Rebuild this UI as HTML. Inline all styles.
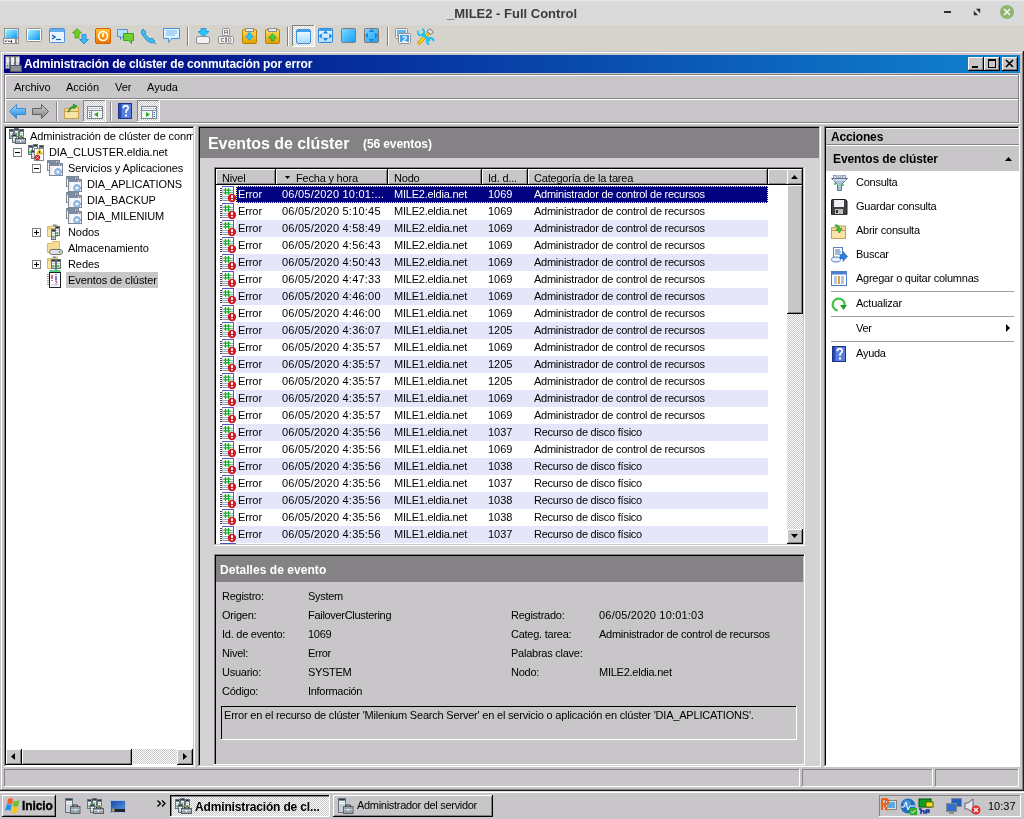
<!DOCTYPE html><html><head><meta charset="utf-8"><style>
html,body{margin:0;padding:0;}
body{width:1024px;height:819px;overflow:hidden;position:relative;background:#c8c6c8;font-family:"Liberation Sans",sans-serif;}
body>div,body>svg{position:absolute;}
.t{white-space:nowrap;will-change:transform;}
</style></head><body>
<div style="left:0px;top:0px;width:1024px;height:25px;background:#dadada;"></div>
<div style="left:0px;top:0px;width:1024px;height:1px;background:#e8e8e8;"></div>
<div class="t" style="left:447px;top:6px;font-size:13px;line-height:16px;font-weight:bold;color:#3c3c3c;letter-spacing:0px;">_MILE2 - Full Control</div>
<div style="left:944px;top:11px;width:7px;height:2px;background:#2e2e2e;"></div>
<svg style="left:972px;top:8px" width="10" height="9"><path d="M3.8 0.8H8.2V5.2Z" fill="#2e2e2e"/><path d="M1.8 2.8V7.2H6.2Z" fill="#2e2e2e"/></svg>
<svg style="left:999px;top:4px" width="16" height="16"><circle cx="8" cy="8" r="7" fill="#8fb572"/><path d="M5 5 L11 11 M11 5 L5 11" stroke="#fff" stroke-width="1.4"/></svg>
<div style="left:0px;top:25px;width:1024px;height:26px;background:#d6d2cc;"></div>
<div style="left:0px;top:51px;width:1024px;height:740px;background:#c8c6c8;"></div>
<div style="left:1px;top:52px;width:1022px;height:1px;background:#ffffff;"></div>
<div style="left:1px;top:52px;width:1px;height:738px;background:#ffffff;"></div>
<div style="left:1023px;top:51px;width:1px;height:740px;background:#202020;"></div>
<div style="left:0px;top:790px;width:1024px;height:1px;background:#202020;"></div>
<div style="left:1022px;top:52px;width:1px;height:738px;background:#848284;"></div>
<div style="left:1px;top:789px;width:1022px;height:1px;background:#848284;"></div>
<div style="left:4px;top:55px;width:1016px;height:18px;background:linear-gradient(to right,#000080,#1084d0)"></div>
<div class="t" style="left:24px;top:57px;font-size:12px;line-height:14px;font-weight:bold;color:#fff;letter-spacing:-0.17px;">Administración de clúster de conmutación por error</div>
<div style="left:968px;top:57px;width:16px;height:14px;background:#c8c6c8;"></div>
<div style="left:968px;top:57px;width:16px;height:1px;background:#ffffff;"></div>
<div style="left:968px;top:57px;width:1px;height:14px;background:#ffffff;"></div>
<div style="left:968px;top:70px;width:16px;height:1px;background:#000000;"></div>
<div style="left:983px;top:57px;width:1px;height:14px;background:#000000;"></div>
<div style="left:969px;top:69px;width:14px;height:1px;background:#848284;"></div>
<div style="left:982px;top:58px;width:1px;height:12px;background:#848284;"></div>
<div style="left:984px;top:57px;width:16px;height:14px;background:#c8c6c8;"></div>
<div style="left:984px;top:57px;width:16px;height:1px;background:#ffffff;"></div>
<div style="left:984px;top:57px;width:1px;height:14px;background:#ffffff;"></div>
<div style="left:984px;top:70px;width:16px;height:1px;background:#000000;"></div>
<div style="left:999px;top:57px;width:1px;height:14px;background:#000000;"></div>
<div style="left:985px;top:69px;width:14px;height:1px;background:#848284;"></div>
<div style="left:998px;top:58px;width:1px;height:12px;background:#848284;"></div>
<div style="left:1002px;top:57px;width:16px;height:14px;background:#c8c6c8;"></div>
<div style="left:1002px;top:57px;width:16px;height:1px;background:#ffffff;"></div>
<div style="left:1002px;top:57px;width:1px;height:14px;background:#ffffff;"></div>
<div style="left:1002px;top:70px;width:16px;height:1px;background:#000000;"></div>
<div style="left:1017px;top:57px;width:1px;height:14px;background:#000000;"></div>
<div style="left:1003px;top:69px;width:14px;height:1px;background:#848284;"></div>
<div style="left:1016px;top:58px;width:1px;height:12px;background:#848284;"></div>
<div style="left:972px;top:66px;width:6px;height:2px;background:#000000;"></div>
<div style="left:988px;top:59px;width:8px;height:9px;background:#000000;"></div>
<div style="left:989px;top:61px;width:6px;height:6px;background:#c8c6c8;"></div>
<svg style="left:1005px;top:59px" width="10" height="9"><path d="M1 1 L8 8 M8 1 L1 8" stroke="#000" stroke-width="1.6"/></svg>
<div style="left:4px;top:74px;width:1016px;height:1px;background:#848284;"></div>
<div style="left:5px;top:75px;width:1014px;height:1px;background:#ffffff;"></div>
<div style="left:4px;top:98px;width:1015px;height:1px;background:#848284;"></div>
<div style="left:5px;top:99px;width:1015px;height:1px;background:#ffffff;"></div>
<div style="left:4px;top:122px;width:1015px;height:1px;background:#848284;"></div>
<div style="left:4px;top:123px;width:1016px;height:1px;background:#ffffff;"></div>
<div style="left:4px;top:74px;width:1px;height:49px;background:#848284;"></div>
<div style="left:5px;top:75px;width:1px;height:47px;background:#ffffff;"></div>
<div style="left:1018px;top:75px;width:1px;height:48px;background:#848284;"></div>
<div style="left:1019px;top:74px;width:1px;height:50px;background:#ffffff;"></div>
<div class="t" style="left:14px;top:81px;font-size:11px;line-height:13px;font-weight:normal;color:#000;letter-spacing:0px;">Archivo</div>
<div class="t" style="left:66px;top:81px;font-size:11px;line-height:13px;font-weight:normal;color:#000;letter-spacing:0px;">Acción</div>
<div class="t" style="left:115px;top:81px;font-size:11px;line-height:13px;font-weight:normal;color:#000;letter-spacing:0px;">Ver</div>
<div class="t" style="left:147px;top:81px;font-size:11px;line-height:13px;font-weight:normal;color:#000;letter-spacing:0px;">Ayuda</div>
<div style="left:4px;top:126px;width:191px;height:1px;background:#848284;"></div>
<div style="left:4px;top:126px;width:1px;height:641px;background:#848284;"></div>
<div style="left:5px;top:127px;width:189px;height:1px;background:#000000;"></div>
<div style="left:5px;top:127px;width:1px;height:639px;background:#000000;"></div>
<div style="left:4px;top:766px;width:191px;height:1px;background:#ffffff;"></div>
<div style="left:194px;top:126px;width:1px;height:641px;background:#ffffff;"></div>
<div style="left:5px;top:765px;width:189px;height:1px;background:#c8c6c8;"></div>
<div style="left:193px;top:127px;width:1px;height:639px;background:#c8c6c8;"></div>
<div style="left:6px;top:128px;width:187px;height:638px;background:#ffffff;"></div>
<div style="left:198px;top:126px;width:623px;height:1px;background:#848284;"></div>
<div style="left:198px;top:126px;width:1px;height:641px;background:#848284;"></div>
<div style="left:199px;top:127px;width:621px;height:1px;background:#000000;"></div>
<div style="left:199px;top:127px;width:1px;height:639px;background:#000000;"></div>
<div style="left:198px;top:766px;width:623px;height:1px;background:#ffffff;"></div>
<div style="left:820px;top:126px;width:1px;height:641px;background:#ffffff;"></div>
<div style="left:199px;top:765px;width:621px;height:1px;background:#c8c6c8;"></div>
<div style="left:819px;top:127px;width:1px;height:639px;background:#c8c6c8;"></div>
<div style="left:200px;top:128px;width:620px;height:638px;background:#d4d2d4;"></div>
<div style="left:824px;top:126px;width:196px;height:1px;background:#848284;"></div>
<div style="left:824px;top:126px;width:1px;height:641px;background:#848284;"></div>
<div style="left:825px;top:127px;width:194px;height:1px;background:#000000;"></div>
<div style="left:825px;top:127px;width:1px;height:639px;background:#000000;"></div>
<div style="left:824px;top:766px;width:196px;height:1px;background:#ffffff;"></div>
<div style="left:1019px;top:126px;width:1px;height:641px;background:#ffffff;"></div>
<div style="left:825px;top:765px;width:194px;height:1px;background:#c8c6c8;"></div>
<div style="left:1018px;top:127px;width:1px;height:639px;background:#c8c6c8;"></div>
<div style="left:826px;top:128px;width:193px;height:638px;background:#ffffff;"></div>
<div style="left:200px;top:128px;width:619px;height:30px;background:#848284;"></div>
<div class="t" style="left:208px;top:134px;font-size:16px;line-height:20px;font-weight:bold;color:#fff;letter-spacing:-0.05px;">Eventos de clúster</div>
<div class="t" style="left:363px;top:137px;font-size:12px;line-height:14px;font-weight:bold;color:#fff;letter-spacing:-0.1px;">(56 eventos)</div>
<div style="left:214px;top:167px;width:591px;height:1px;background:#848284;"></div>
<div style="left:214px;top:167px;width:1px;height:379px;background:#848284;"></div>
<div style="left:215px;top:168px;width:589px;height:1px;background:#000000;"></div>
<div style="left:215px;top:168px;width:1px;height:377px;background:#000000;"></div>
<div style="left:214px;top:545px;width:591px;height:1px;background:#ffffff;"></div>
<div style="left:804px;top:167px;width:1px;height:379px;background:#ffffff;"></div>
<div style="left:215px;top:544px;width:589px;height:1px;background:#c8c6c8;"></div>
<div style="left:803px;top:168px;width:1px;height:377px;background:#c8c6c8;"></div>
<div style="left:216px;top:169px;width:587px;height:375px;background:#ffffff;"></div>
<div style="left:216px;top:169px;width:60px;height:16px;background:#c8c6c8;"></div>
<div style="left:216px;top:169px;width:60px;height:1px;background:#ffffff;"></div>
<div style="left:216px;top:169px;width:1px;height:16px;background:#ffffff;"></div>
<div style="left:216px;top:184px;width:60px;height:1px;background:#000000;"></div>
<div style="left:217px;top:183px;width:58px;height:1px;background:#848284;"></div>
<div style="left:275px;top:169px;width:1px;height:16px;background:#000000;"></div>
<div style="left:274px;top:170px;width:1px;height:14px;background:#848284;"></div>
<div class="t" style="left:222px;top:172px;font-size:11px;line-height:13px;font-weight:normal;color:#000;letter-spacing:-0.2px;">Nivel</div>
<div style="left:276px;top:169px;width:112px;height:16px;background:#c8c6c8;"></div>
<div style="left:276px;top:169px;width:112px;height:1px;background:#ffffff;"></div>
<div style="left:276px;top:169px;width:1px;height:16px;background:#ffffff;"></div>
<div style="left:276px;top:184px;width:112px;height:1px;background:#000000;"></div>
<div style="left:277px;top:183px;width:110px;height:1px;background:#848284;"></div>
<div style="left:387px;top:169px;width:1px;height:16px;background:#000000;"></div>
<div style="left:386px;top:170px;width:1px;height:14px;background:#848284;"></div>
<div class="t" style="left:296px;top:172px;font-size:11px;line-height:13px;font-weight:normal;color:#000;letter-spacing:-0.2px;">Fecha y hora</div>
<div style="left:388px;top:169px;width:94px;height:16px;background:#c8c6c8;"></div>
<div style="left:388px;top:169px;width:94px;height:1px;background:#ffffff;"></div>
<div style="left:388px;top:169px;width:1px;height:16px;background:#ffffff;"></div>
<div style="left:388px;top:184px;width:94px;height:1px;background:#000000;"></div>
<div style="left:389px;top:183px;width:92px;height:1px;background:#848284;"></div>
<div style="left:481px;top:169px;width:1px;height:16px;background:#000000;"></div>
<div style="left:480px;top:170px;width:1px;height:14px;background:#848284;"></div>
<div class="t" style="left:394px;top:172px;font-size:11px;line-height:13px;font-weight:normal;color:#000;letter-spacing:-0.2px;">Nodo</div>
<div style="left:482px;top:169px;width:46px;height:16px;background:#c8c6c8;"></div>
<div style="left:482px;top:169px;width:46px;height:1px;background:#ffffff;"></div>
<div style="left:482px;top:169px;width:1px;height:16px;background:#ffffff;"></div>
<div style="left:482px;top:184px;width:46px;height:1px;background:#000000;"></div>
<div style="left:483px;top:183px;width:44px;height:1px;background:#848284;"></div>
<div style="left:527px;top:169px;width:1px;height:16px;background:#000000;"></div>
<div style="left:526px;top:170px;width:1px;height:14px;background:#848284;"></div>
<div class="t" style="left:488px;top:172px;font-size:11px;line-height:13px;font-weight:normal;color:#000;letter-spacing:-0.2px;">Id. d...</div>
<div style="left:528px;top:169px;width:240px;height:16px;background:#c8c6c8;"></div>
<div style="left:528px;top:169px;width:240px;height:1px;background:#ffffff;"></div>
<div style="left:528px;top:169px;width:1px;height:16px;background:#ffffff;"></div>
<div style="left:528px;top:184px;width:240px;height:1px;background:#000000;"></div>
<div style="left:529px;top:183px;width:238px;height:1px;background:#848284;"></div>
<div style="left:767px;top:169px;width:1px;height:16px;background:#000000;"></div>
<div style="left:766px;top:170px;width:1px;height:14px;background:#848284;"></div>
<div class="t" style="left:534px;top:172px;font-size:11px;line-height:13px;font-weight:normal;color:#000;letter-spacing:-0.2px;">Categoría de la tarea</div>
<div style="left:768px;top:169px;width:19px;height:16px;background:#c8c6c8;"></div>
<div style="left:768px;top:169px;width:19px;height:1px;background:#ffffff;"></div>
<div style="left:768px;top:169px;width:1px;height:16px;background:#ffffff;"></div>
<div style="left:768px;top:184px;width:19px;height:1px;background:#000000;"></div>
<div style="left:769px;top:183px;width:17px;height:1px;background:#848284;"></div>
<svg style="left:285px;top:176px" width="5" height="3"><path d="M0 0 H5 L2.5 3Z" fill="#000"/></svg>
<div style="left:236px;top:186px;width:532px;height:17px;background:#000080;"></div>
<div style="left:236px;top:186px;width:530px;height:15px;border:1px dotted #ffff80;"></div>
<svg style="left:220px;top:186px" width="17" height="17" viewBox="0 0 17 17"><rect x="2" y="0" width="12" height="15" fill="#fff"/><path d="M2 0.5H14M13.5 0.5V15" stroke="#5858c8"/><path d="M2 14.5H14" stroke="#909090"/><path d="M0 2.5h2M0 4.5h2M0 6.5h2M0 8.5h2M0 10.5h2M0 12.5h2M0 14.5h2" stroke="#404040"/><path d="M2.5 1v14" stroke="#c8c8d8"/><path d="M3 4.5h10M3 6.5h10M3 10.5h10M3 12.5h10" stroke="#88b8d0"/><path d="M5.5 2v7M8.5 2v7M3.5 4h7M3.5 7h7" stroke="#18b018" stroke-width="1.2"/><circle cx="12" cy="12" r="4.2" fill="#d01c24"/><rect x="11" y="9.3" width="2" height="2.6" fill="#fff"/><rect x="11" y="13" width="2" height="1.2" fill="#fff"/></svg>
<div class="t" style="left:238px;top:188px;font-size:11px;line-height:13px;font-weight:normal;color:#fff;letter-spacing:-0.1px;">Error</div>
<div class="t" style="left:282px;top:188px;font-size:11px;line-height:13px;font-weight:normal;color:#fff;letter-spacing:0.22px;">06/05/2020 10:01:...</div>
<div class="t" style="left:394px;top:188px;font-size:11px;line-height:13px;font-weight:normal;color:#fff;letter-spacing:-0.23px;">MILE2.eldia.net</div>
<div class="t" style="left:488px;top:188px;font-size:11px;line-height:13px;font-weight:normal;color:#fff;letter-spacing:0px;">1069</div>
<div class="t" style="left:534px;top:188px;font-size:11px;line-height:13px;font-weight:normal;color:#fff;letter-spacing:-0.25px;">Administrador de control de recursos</div>
<svg style="left:220px;top:203px" width="17" height="17" viewBox="0 0 17 17"><rect x="2" y="0" width="12" height="15" fill="#fff"/><path d="M2 0.5H14M13.5 0.5V15" stroke="#5858c8"/><path d="M2 14.5H14" stroke="#909090"/><path d="M0 2.5h2M0 4.5h2M0 6.5h2M0 8.5h2M0 10.5h2M0 12.5h2M0 14.5h2" stroke="#404040"/><path d="M2.5 1v14" stroke="#c8c8d8"/><path d="M3 4.5h10M3 6.5h10M3 10.5h10M3 12.5h10" stroke="#88b8d0"/><path d="M5.5 2v7M8.5 2v7M3.5 4h7M3.5 7h7" stroke="#18b018" stroke-width="1.2"/><circle cx="12" cy="12" r="4.2" fill="#d01c24"/><rect x="11" y="9.3" width="2" height="2.6" fill="#fff"/><rect x="11" y="13" width="2" height="1.2" fill="#fff"/></svg>
<div class="t" style="left:238px;top:205px;font-size:11px;line-height:13px;font-weight:normal;color:#000;letter-spacing:-0.1px;">Error</div>
<div class="t" style="left:282px;top:205px;font-size:11px;line-height:13px;font-weight:normal;color:#000;letter-spacing:0.22px;">06/05/2020 5:10:45</div>
<div class="t" style="left:394px;top:205px;font-size:11px;line-height:13px;font-weight:normal;color:#000;letter-spacing:-0.23px;">MILE2.eldia.net</div>
<div class="t" style="left:488px;top:205px;font-size:11px;line-height:13px;font-weight:normal;color:#000;letter-spacing:0px;">1069</div>
<div class="t" style="left:534px;top:205px;font-size:11px;line-height:13px;font-weight:normal;color:#000;letter-spacing:-0.25px;">Administrador de control de recursos</div>
<div style="left:236px;top:220px;width:532px;height:17px;background:#e6e6fa;"></div>
<svg style="left:220px;top:220px" width="17" height="17" viewBox="0 0 17 17"><rect x="2" y="0" width="12" height="15" fill="#fff"/><path d="M2 0.5H14M13.5 0.5V15" stroke="#5858c8"/><path d="M2 14.5H14" stroke="#909090"/><path d="M0 2.5h2M0 4.5h2M0 6.5h2M0 8.5h2M0 10.5h2M0 12.5h2M0 14.5h2" stroke="#404040"/><path d="M2.5 1v14" stroke="#c8c8d8"/><path d="M3 4.5h10M3 6.5h10M3 10.5h10M3 12.5h10" stroke="#88b8d0"/><path d="M5.5 2v7M8.5 2v7M3.5 4h7M3.5 7h7" stroke="#18b018" stroke-width="1.2"/><circle cx="12" cy="12" r="4.2" fill="#d01c24"/><rect x="11" y="9.3" width="2" height="2.6" fill="#fff"/><rect x="11" y="13" width="2" height="1.2" fill="#fff"/></svg>
<div class="t" style="left:238px;top:222px;font-size:11px;line-height:13px;font-weight:normal;color:#000;letter-spacing:-0.1px;">Error</div>
<div class="t" style="left:282px;top:222px;font-size:11px;line-height:13px;font-weight:normal;color:#000;letter-spacing:0.22px;">06/05/2020 4:58:49</div>
<div class="t" style="left:394px;top:222px;font-size:11px;line-height:13px;font-weight:normal;color:#000;letter-spacing:-0.23px;">MILE2.eldia.net</div>
<div class="t" style="left:488px;top:222px;font-size:11px;line-height:13px;font-weight:normal;color:#000;letter-spacing:0px;">1069</div>
<div class="t" style="left:534px;top:222px;font-size:11px;line-height:13px;font-weight:normal;color:#000;letter-spacing:-0.25px;">Administrador de control de recursos</div>
<svg style="left:220px;top:237px" width="17" height="17" viewBox="0 0 17 17"><rect x="2" y="0" width="12" height="15" fill="#fff"/><path d="M2 0.5H14M13.5 0.5V15" stroke="#5858c8"/><path d="M2 14.5H14" stroke="#909090"/><path d="M0 2.5h2M0 4.5h2M0 6.5h2M0 8.5h2M0 10.5h2M0 12.5h2M0 14.5h2" stroke="#404040"/><path d="M2.5 1v14" stroke="#c8c8d8"/><path d="M3 4.5h10M3 6.5h10M3 10.5h10M3 12.5h10" stroke="#88b8d0"/><path d="M5.5 2v7M8.5 2v7M3.5 4h7M3.5 7h7" stroke="#18b018" stroke-width="1.2"/><circle cx="12" cy="12" r="4.2" fill="#d01c24"/><rect x="11" y="9.3" width="2" height="2.6" fill="#fff"/><rect x="11" y="13" width="2" height="1.2" fill="#fff"/></svg>
<div class="t" style="left:238px;top:239px;font-size:11px;line-height:13px;font-weight:normal;color:#000;letter-spacing:-0.1px;">Error</div>
<div class="t" style="left:282px;top:239px;font-size:11px;line-height:13px;font-weight:normal;color:#000;letter-spacing:0.22px;">06/05/2020 4:56:43</div>
<div class="t" style="left:394px;top:239px;font-size:11px;line-height:13px;font-weight:normal;color:#000;letter-spacing:-0.23px;">MILE2.eldia.net</div>
<div class="t" style="left:488px;top:239px;font-size:11px;line-height:13px;font-weight:normal;color:#000;letter-spacing:0px;">1069</div>
<div class="t" style="left:534px;top:239px;font-size:11px;line-height:13px;font-weight:normal;color:#000;letter-spacing:-0.25px;">Administrador de control de recursos</div>
<div style="left:236px;top:254px;width:532px;height:17px;background:#e6e6fa;"></div>
<svg style="left:220px;top:254px" width="17" height="17" viewBox="0 0 17 17"><rect x="2" y="0" width="12" height="15" fill="#fff"/><path d="M2 0.5H14M13.5 0.5V15" stroke="#5858c8"/><path d="M2 14.5H14" stroke="#909090"/><path d="M0 2.5h2M0 4.5h2M0 6.5h2M0 8.5h2M0 10.5h2M0 12.5h2M0 14.5h2" stroke="#404040"/><path d="M2.5 1v14" stroke="#c8c8d8"/><path d="M3 4.5h10M3 6.5h10M3 10.5h10M3 12.5h10" stroke="#88b8d0"/><path d="M5.5 2v7M8.5 2v7M3.5 4h7M3.5 7h7" stroke="#18b018" stroke-width="1.2"/><circle cx="12" cy="12" r="4.2" fill="#d01c24"/><rect x="11" y="9.3" width="2" height="2.6" fill="#fff"/><rect x="11" y="13" width="2" height="1.2" fill="#fff"/></svg>
<div class="t" style="left:238px;top:256px;font-size:11px;line-height:13px;font-weight:normal;color:#000;letter-spacing:-0.1px;">Error</div>
<div class="t" style="left:282px;top:256px;font-size:11px;line-height:13px;font-weight:normal;color:#000;letter-spacing:0.22px;">06/05/2020 4:50:43</div>
<div class="t" style="left:394px;top:256px;font-size:11px;line-height:13px;font-weight:normal;color:#000;letter-spacing:-0.23px;">MILE2.eldia.net</div>
<div class="t" style="left:488px;top:256px;font-size:11px;line-height:13px;font-weight:normal;color:#000;letter-spacing:0px;">1069</div>
<div class="t" style="left:534px;top:256px;font-size:11px;line-height:13px;font-weight:normal;color:#000;letter-spacing:-0.25px;">Administrador de control de recursos</div>
<svg style="left:220px;top:271px" width="17" height="17" viewBox="0 0 17 17"><rect x="2" y="0" width="12" height="15" fill="#fff"/><path d="M2 0.5H14M13.5 0.5V15" stroke="#5858c8"/><path d="M2 14.5H14" stroke="#909090"/><path d="M0 2.5h2M0 4.5h2M0 6.5h2M0 8.5h2M0 10.5h2M0 12.5h2M0 14.5h2" stroke="#404040"/><path d="M2.5 1v14" stroke="#c8c8d8"/><path d="M3 4.5h10M3 6.5h10M3 10.5h10M3 12.5h10" stroke="#88b8d0"/><path d="M5.5 2v7M8.5 2v7M3.5 4h7M3.5 7h7" stroke="#18b018" stroke-width="1.2"/><circle cx="12" cy="12" r="4.2" fill="#d01c24"/><rect x="11" y="9.3" width="2" height="2.6" fill="#fff"/><rect x="11" y="13" width="2" height="1.2" fill="#fff"/></svg>
<div class="t" style="left:238px;top:273px;font-size:11px;line-height:13px;font-weight:normal;color:#000;letter-spacing:-0.1px;">Error</div>
<div class="t" style="left:282px;top:273px;font-size:11px;line-height:13px;font-weight:normal;color:#000;letter-spacing:0.22px;">06/05/2020 4:47:33</div>
<div class="t" style="left:394px;top:273px;font-size:11px;line-height:13px;font-weight:normal;color:#000;letter-spacing:-0.23px;">MILE2.eldia.net</div>
<div class="t" style="left:488px;top:273px;font-size:11px;line-height:13px;font-weight:normal;color:#000;letter-spacing:0px;">1069</div>
<div class="t" style="left:534px;top:273px;font-size:11px;line-height:13px;font-weight:normal;color:#000;letter-spacing:-0.25px;">Administrador de control de recursos</div>
<div style="left:236px;top:288px;width:532px;height:17px;background:#e6e6fa;"></div>
<svg style="left:220px;top:288px" width="17" height="17" viewBox="0 0 17 17"><rect x="2" y="0" width="12" height="15" fill="#fff"/><path d="M2 0.5H14M13.5 0.5V15" stroke="#5858c8"/><path d="M2 14.5H14" stroke="#909090"/><path d="M0 2.5h2M0 4.5h2M0 6.5h2M0 8.5h2M0 10.5h2M0 12.5h2M0 14.5h2" stroke="#404040"/><path d="M2.5 1v14" stroke="#c8c8d8"/><path d="M3 4.5h10M3 6.5h10M3 10.5h10M3 12.5h10" stroke="#88b8d0"/><path d="M5.5 2v7M8.5 2v7M3.5 4h7M3.5 7h7" stroke="#18b018" stroke-width="1.2"/><circle cx="12" cy="12" r="4.2" fill="#d01c24"/><rect x="11" y="9.3" width="2" height="2.6" fill="#fff"/><rect x="11" y="13" width="2" height="1.2" fill="#fff"/></svg>
<div class="t" style="left:238px;top:290px;font-size:11px;line-height:13px;font-weight:normal;color:#000;letter-spacing:-0.1px;">Error</div>
<div class="t" style="left:282px;top:290px;font-size:11px;line-height:13px;font-weight:normal;color:#000;letter-spacing:0.22px;">06/05/2020 4:46:00</div>
<div class="t" style="left:394px;top:290px;font-size:11px;line-height:13px;font-weight:normal;color:#000;letter-spacing:-0.23px;">MILE1.eldia.net</div>
<div class="t" style="left:488px;top:290px;font-size:11px;line-height:13px;font-weight:normal;color:#000;letter-spacing:0px;">1069</div>
<div class="t" style="left:534px;top:290px;font-size:11px;line-height:13px;font-weight:normal;color:#000;letter-spacing:-0.25px;">Administrador de control de recursos</div>
<svg style="left:220px;top:305px" width="17" height="17" viewBox="0 0 17 17"><rect x="2" y="0" width="12" height="15" fill="#fff"/><path d="M2 0.5H14M13.5 0.5V15" stroke="#5858c8"/><path d="M2 14.5H14" stroke="#909090"/><path d="M0 2.5h2M0 4.5h2M0 6.5h2M0 8.5h2M0 10.5h2M0 12.5h2M0 14.5h2" stroke="#404040"/><path d="M2.5 1v14" stroke="#c8c8d8"/><path d="M3 4.5h10M3 6.5h10M3 10.5h10M3 12.5h10" stroke="#88b8d0"/><path d="M5.5 2v7M8.5 2v7M3.5 4h7M3.5 7h7" stroke="#18b018" stroke-width="1.2"/><circle cx="12" cy="12" r="4.2" fill="#d01c24"/><rect x="11" y="9.3" width="2" height="2.6" fill="#fff"/><rect x="11" y="13" width="2" height="1.2" fill="#fff"/></svg>
<div class="t" style="left:238px;top:307px;font-size:11px;line-height:13px;font-weight:normal;color:#000;letter-spacing:-0.1px;">Error</div>
<div class="t" style="left:282px;top:307px;font-size:11px;line-height:13px;font-weight:normal;color:#000;letter-spacing:0.22px;">06/05/2020 4:46:00</div>
<div class="t" style="left:394px;top:307px;font-size:11px;line-height:13px;font-weight:normal;color:#000;letter-spacing:-0.23px;">MILE1.eldia.net</div>
<div class="t" style="left:488px;top:307px;font-size:11px;line-height:13px;font-weight:normal;color:#000;letter-spacing:0px;">1069</div>
<div class="t" style="left:534px;top:307px;font-size:11px;line-height:13px;font-weight:normal;color:#000;letter-spacing:-0.25px;">Administrador de control de recursos</div>
<div style="left:236px;top:322px;width:532px;height:17px;background:#e6e6fa;"></div>
<svg style="left:220px;top:322px" width="17" height="17" viewBox="0 0 17 17"><rect x="2" y="0" width="12" height="15" fill="#fff"/><path d="M2 0.5H14M13.5 0.5V15" stroke="#5858c8"/><path d="M2 14.5H14" stroke="#909090"/><path d="M0 2.5h2M0 4.5h2M0 6.5h2M0 8.5h2M0 10.5h2M0 12.5h2M0 14.5h2" stroke="#404040"/><path d="M2.5 1v14" stroke="#c8c8d8"/><path d="M3 4.5h10M3 6.5h10M3 10.5h10M3 12.5h10" stroke="#88b8d0"/><path d="M5.5 2v7M8.5 2v7M3.5 4h7M3.5 7h7" stroke="#18b018" stroke-width="1.2"/><circle cx="12" cy="12" r="4.2" fill="#d01c24"/><rect x="11" y="9.3" width="2" height="2.6" fill="#fff"/><rect x="11" y="13" width="2" height="1.2" fill="#fff"/></svg>
<div class="t" style="left:238px;top:324px;font-size:11px;line-height:13px;font-weight:normal;color:#000;letter-spacing:-0.1px;">Error</div>
<div class="t" style="left:282px;top:324px;font-size:11px;line-height:13px;font-weight:normal;color:#000;letter-spacing:0.22px;">06/05/2020 4:36:07</div>
<div class="t" style="left:394px;top:324px;font-size:11px;line-height:13px;font-weight:normal;color:#000;letter-spacing:-0.23px;">MILE1.eldia.net</div>
<div class="t" style="left:488px;top:324px;font-size:11px;line-height:13px;font-weight:normal;color:#000;letter-spacing:0px;">1205</div>
<div class="t" style="left:534px;top:324px;font-size:11px;line-height:13px;font-weight:normal;color:#000;letter-spacing:-0.25px;">Administrador de control de recursos</div>
<svg style="left:220px;top:339px" width="17" height="17" viewBox="0 0 17 17"><rect x="2" y="0" width="12" height="15" fill="#fff"/><path d="M2 0.5H14M13.5 0.5V15" stroke="#5858c8"/><path d="M2 14.5H14" stroke="#909090"/><path d="M0 2.5h2M0 4.5h2M0 6.5h2M0 8.5h2M0 10.5h2M0 12.5h2M0 14.5h2" stroke="#404040"/><path d="M2.5 1v14" stroke="#c8c8d8"/><path d="M3 4.5h10M3 6.5h10M3 10.5h10M3 12.5h10" stroke="#88b8d0"/><path d="M5.5 2v7M8.5 2v7M3.5 4h7M3.5 7h7" stroke="#18b018" stroke-width="1.2"/><circle cx="12" cy="12" r="4.2" fill="#d01c24"/><rect x="11" y="9.3" width="2" height="2.6" fill="#fff"/><rect x="11" y="13" width="2" height="1.2" fill="#fff"/></svg>
<div class="t" style="left:238px;top:341px;font-size:11px;line-height:13px;font-weight:normal;color:#000;letter-spacing:-0.1px;">Error</div>
<div class="t" style="left:282px;top:341px;font-size:11px;line-height:13px;font-weight:normal;color:#000;letter-spacing:0.22px;">06/05/2020 4:35:57</div>
<div class="t" style="left:394px;top:341px;font-size:11px;line-height:13px;font-weight:normal;color:#000;letter-spacing:-0.23px;">MILE1.eldia.net</div>
<div class="t" style="left:488px;top:341px;font-size:11px;line-height:13px;font-weight:normal;color:#000;letter-spacing:0px;">1069</div>
<div class="t" style="left:534px;top:341px;font-size:11px;line-height:13px;font-weight:normal;color:#000;letter-spacing:-0.25px;">Administrador de control de recursos</div>
<div style="left:236px;top:356px;width:532px;height:17px;background:#e6e6fa;"></div>
<svg style="left:220px;top:356px" width="17" height="17" viewBox="0 0 17 17"><rect x="2" y="0" width="12" height="15" fill="#fff"/><path d="M2 0.5H14M13.5 0.5V15" stroke="#5858c8"/><path d="M2 14.5H14" stroke="#909090"/><path d="M0 2.5h2M0 4.5h2M0 6.5h2M0 8.5h2M0 10.5h2M0 12.5h2M0 14.5h2" stroke="#404040"/><path d="M2.5 1v14" stroke="#c8c8d8"/><path d="M3 4.5h10M3 6.5h10M3 10.5h10M3 12.5h10" stroke="#88b8d0"/><path d="M5.5 2v7M8.5 2v7M3.5 4h7M3.5 7h7" stroke="#18b018" stroke-width="1.2"/><circle cx="12" cy="12" r="4.2" fill="#d01c24"/><rect x="11" y="9.3" width="2" height="2.6" fill="#fff"/><rect x="11" y="13" width="2" height="1.2" fill="#fff"/></svg>
<div class="t" style="left:238px;top:358px;font-size:11px;line-height:13px;font-weight:normal;color:#000;letter-spacing:-0.1px;">Error</div>
<div class="t" style="left:282px;top:358px;font-size:11px;line-height:13px;font-weight:normal;color:#000;letter-spacing:0.22px;">06/05/2020 4:35:57</div>
<div class="t" style="left:394px;top:358px;font-size:11px;line-height:13px;font-weight:normal;color:#000;letter-spacing:-0.23px;">MILE1.eldia.net</div>
<div class="t" style="left:488px;top:358px;font-size:11px;line-height:13px;font-weight:normal;color:#000;letter-spacing:0px;">1205</div>
<div class="t" style="left:534px;top:358px;font-size:11px;line-height:13px;font-weight:normal;color:#000;letter-spacing:-0.25px;">Administrador de control de recursos</div>
<svg style="left:220px;top:373px" width="17" height="17" viewBox="0 0 17 17"><rect x="2" y="0" width="12" height="15" fill="#fff"/><path d="M2 0.5H14M13.5 0.5V15" stroke="#5858c8"/><path d="M2 14.5H14" stroke="#909090"/><path d="M0 2.5h2M0 4.5h2M0 6.5h2M0 8.5h2M0 10.5h2M0 12.5h2M0 14.5h2" stroke="#404040"/><path d="M2.5 1v14" stroke="#c8c8d8"/><path d="M3 4.5h10M3 6.5h10M3 10.5h10M3 12.5h10" stroke="#88b8d0"/><path d="M5.5 2v7M8.5 2v7M3.5 4h7M3.5 7h7" stroke="#18b018" stroke-width="1.2"/><circle cx="12" cy="12" r="4.2" fill="#d01c24"/><rect x="11" y="9.3" width="2" height="2.6" fill="#fff"/><rect x="11" y="13" width="2" height="1.2" fill="#fff"/></svg>
<div class="t" style="left:238px;top:375px;font-size:11px;line-height:13px;font-weight:normal;color:#000;letter-spacing:-0.1px;">Error</div>
<div class="t" style="left:282px;top:375px;font-size:11px;line-height:13px;font-weight:normal;color:#000;letter-spacing:0.22px;">06/05/2020 4:35:57</div>
<div class="t" style="left:394px;top:375px;font-size:11px;line-height:13px;font-weight:normal;color:#000;letter-spacing:-0.23px;">MILE1.eldia.net</div>
<div class="t" style="left:488px;top:375px;font-size:11px;line-height:13px;font-weight:normal;color:#000;letter-spacing:0px;">1205</div>
<div class="t" style="left:534px;top:375px;font-size:11px;line-height:13px;font-weight:normal;color:#000;letter-spacing:-0.25px;">Administrador de control de recursos</div>
<div style="left:236px;top:390px;width:532px;height:17px;background:#e6e6fa;"></div>
<svg style="left:220px;top:390px" width="17" height="17" viewBox="0 0 17 17"><rect x="2" y="0" width="12" height="15" fill="#fff"/><path d="M2 0.5H14M13.5 0.5V15" stroke="#5858c8"/><path d="M2 14.5H14" stroke="#909090"/><path d="M0 2.5h2M0 4.5h2M0 6.5h2M0 8.5h2M0 10.5h2M0 12.5h2M0 14.5h2" stroke="#404040"/><path d="M2.5 1v14" stroke="#c8c8d8"/><path d="M3 4.5h10M3 6.5h10M3 10.5h10M3 12.5h10" stroke="#88b8d0"/><path d="M5.5 2v7M8.5 2v7M3.5 4h7M3.5 7h7" stroke="#18b018" stroke-width="1.2"/><circle cx="12" cy="12" r="4.2" fill="#d01c24"/><rect x="11" y="9.3" width="2" height="2.6" fill="#fff"/><rect x="11" y="13" width="2" height="1.2" fill="#fff"/></svg>
<div class="t" style="left:238px;top:392px;font-size:11px;line-height:13px;font-weight:normal;color:#000;letter-spacing:-0.1px;">Error</div>
<div class="t" style="left:282px;top:392px;font-size:11px;line-height:13px;font-weight:normal;color:#000;letter-spacing:0.22px;">06/05/2020 4:35:57</div>
<div class="t" style="left:394px;top:392px;font-size:11px;line-height:13px;font-weight:normal;color:#000;letter-spacing:-0.23px;">MILE1.eldia.net</div>
<div class="t" style="left:488px;top:392px;font-size:11px;line-height:13px;font-weight:normal;color:#000;letter-spacing:0px;">1069</div>
<div class="t" style="left:534px;top:392px;font-size:11px;line-height:13px;font-weight:normal;color:#000;letter-spacing:-0.25px;">Administrador de control de recursos</div>
<svg style="left:220px;top:407px" width="17" height="17" viewBox="0 0 17 17"><rect x="2" y="0" width="12" height="15" fill="#fff"/><path d="M2 0.5H14M13.5 0.5V15" stroke="#5858c8"/><path d="M2 14.5H14" stroke="#909090"/><path d="M0 2.5h2M0 4.5h2M0 6.5h2M0 8.5h2M0 10.5h2M0 12.5h2M0 14.5h2" stroke="#404040"/><path d="M2.5 1v14" stroke="#c8c8d8"/><path d="M3 4.5h10M3 6.5h10M3 10.5h10M3 12.5h10" stroke="#88b8d0"/><path d="M5.5 2v7M8.5 2v7M3.5 4h7M3.5 7h7" stroke="#18b018" stroke-width="1.2"/><circle cx="12" cy="12" r="4.2" fill="#d01c24"/><rect x="11" y="9.3" width="2" height="2.6" fill="#fff"/><rect x="11" y="13" width="2" height="1.2" fill="#fff"/></svg>
<div class="t" style="left:238px;top:409px;font-size:11px;line-height:13px;font-weight:normal;color:#000;letter-spacing:-0.1px;">Error</div>
<div class="t" style="left:282px;top:409px;font-size:11px;line-height:13px;font-weight:normal;color:#000;letter-spacing:0.22px;">06/05/2020 4:35:57</div>
<div class="t" style="left:394px;top:409px;font-size:11px;line-height:13px;font-weight:normal;color:#000;letter-spacing:-0.23px;">MILE1.eldia.net</div>
<div class="t" style="left:488px;top:409px;font-size:11px;line-height:13px;font-weight:normal;color:#000;letter-spacing:0px;">1069</div>
<div class="t" style="left:534px;top:409px;font-size:11px;line-height:13px;font-weight:normal;color:#000;letter-spacing:-0.25px;">Administrador de control de recursos</div>
<div style="left:236px;top:424px;width:532px;height:17px;background:#e6e6fa;"></div>
<svg style="left:220px;top:424px" width="17" height="17" viewBox="0 0 17 17"><rect x="2" y="0" width="12" height="15" fill="#fff"/><path d="M2 0.5H14M13.5 0.5V15" stroke="#5858c8"/><path d="M2 14.5H14" stroke="#909090"/><path d="M0 2.5h2M0 4.5h2M0 6.5h2M0 8.5h2M0 10.5h2M0 12.5h2M0 14.5h2" stroke="#404040"/><path d="M2.5 1v14" stroke="#c8c8d8"/><path d="M3 4.5h10M3 6.5h10M3 10.5h10M3 12.5h10" stroke="#88b8d0"/><path d="M5.5 2v7M8.5 2v7M3.5 4h7M3.5 7h7" stroke="#18b018" stroke-width="1.2"/><circle cx="12" cy="12" r="4.2" fill="#d01c24"/><rect x="11" y="9.3" width="2" height="2.6" fill="#fff"/><rect x="11" y="13" width="2" height="1.2" fill="#fff"/></svg>
<div class="t" style="left:238px;top:426px;font-size:11px;line-height:13px;font-weight:normal;color:#000;letter-spacing:-0.1px;">Error</div>
<div class="t" style="left:282px;top:426px;font-size:11px;line-height:13px;font-weight:normal;color:#000;letter-spacing:0.22px;">06/05/2020 4:35:56</div>
<div class="t" style="left:394px;top:426px;font-size:11px;line-height:13px;font-weight:normal;color:#000;letter-spacing:-0.23px;">MILE1.eldia.net</div>
<div class="t" style="left:488px;top:426px;font-size:11px;line-height:13px;font-weight:normal;color:#000;letter-spacing:0px;">1037</div>
<div class="t" style="left:534px;top:426px;font-size:11px;line-height:13px;font-weight:normal;color:#000;letter-spacing:-0.25px;">Recurso de disco físico</div>
<svg style="left:220px;top:441px" width="17" height="17" viewBox="0 0 17 17"><rect x="2" y="0" width="12" height="15" fill="#fff"/><path d="M2 0.5H14M13.5 0.5V15" stroke="#5858c8"/><path d="M2 14.5H14" stroke="#909090"/><path d="M0 2.5h2M0 4.5h2M0 6.5h2M0 8.5h2M0 10.5h2M0 12.5h2M0 14.5h2" stroke="#404040"/><path d="M2.5 1v14" stroke="#c8c8d8"/><path d="M3 4.5h10M3 6.5h10M3 10.5h10M3 12.5h10" stroke="#88b8d0"/><path d="M5.5 2v7M8.5 2v7M3.5 4h7M3.5 7h7" stroke="#18b018" stroke-width="1.2"/><circle cx="12" cy="12" r="4.2" fill="#d01c24"/><rect x="11" y="9.3" width="2" height="2.6" fill="#fff"/><rect x="11" y="13" width="2" height="1.2" fill="#fff"/></svg>
<div class="t" style="left:238px;top:443px;font-size:11px;line-height:13px;font-weight:normal;color:#000;letter-spacing:-0.1px;">Error</div>
<div class="t" style="left:282px;top:443px;font-size:11px;line-height:13px;font-weight:normal;color:#000;letter-spacing:0.22px;">06/05/2020 4:35:56</div>
<div class="t" style="left:394px;top:443px;font-size:11px;line-height:13px;font-weight:normal;color:#000;letter-spacing:-0.23px;">MILE1.eldia.net</div>
<div class="t" style="left:488px;top:443px;font-size:11px;line-height:13px;font-weight:normal;color:#000;letter-spacing:0px;">1069</div>
<div class="t" style="left:534px;top:443px;font-size:11px;line-height:13px;font-weight:normal;color:#000;letter-spacing:-0.25px;">Administrador de control de recursos</div>
<div style="left:236px;top:458px;width:532px;height:17px;background:#e6e6fa;"></div>
<svg style="left:220px;top:458px" width="17" height="17" viewBox="0 0 17 17"><rect x="2" y="0" width="12" height="15" fill="#fff"/><path d="M2 0.5H14M13.5 0.5V15" stroke="#5858c8"/><path d="M2 14.5H14" stroke="#909090"/><path d="M0 2.5h2M0 4.5h2M0 6.5h2M0 8.5h2M0 10.5h2M0 12.5h2M0 14.5h2" stroke="#404040"/><path d="M2.5 1v14" stroke="#c8c8d8"/><path d="M3 4.5h10M3 6.5h10M3 10.5h10M3 12.5h10" stroke="#88b8d0"/><path d="M5.5 2v7M8.5 2v7M3.5 4h7M3.5 7h7" stroke="#18b018" stroke-width="1.2"/><circle cx="12" cy="12" r="4.2" fill="#d01c24"/><rect x="11" y="9.3" width="2" height="2.6" fill="#fff"/><rect x="11" y="13" width="2" height="1.2" fill="#fff"/></svg>
<div class="t" style="left:238px;top:460px;font-size:11px;line-height:13px;font-weight:normal;color:#000;letter-spacing:-0.1px;">Error</div>
<div class="t" style="left:282px;top:460px;font-size:11px;line-height:13px;font-weight:normal;color:#000;letter-spacing:0.22px;">06/05/2020 4:35:56</div>
<div class="t" style="left:394px;top:460px;font-size:11px;line-height:13px;font-weight:normal;color:#000;letter-spacing:-0.23px;">MILE1.eldia.net</div>
<div class="t" style="left:488px;top:460px;font-size:11px;line-height:13px;font-weight:normal;color:#000;letter-spacing:0px;">1038</div>
<div class="t" style="left:534px;top:460px;font-size:11px;line-height:13px;font-weight:normal;color:#000;letter-spacing:-0.25px;">Recurso de disco físico</div>
<svg style="left:220px;top:475px" width="17" height="17" viewBox="0 0 17 17"><rect x="2" y="0" width="12" height="15" fill="#fff"/><path d="M2 0.5H14M13.5 0.5V15" stroke="#5858c8"/><path d="M2 14.5H14" stroke="#909090"/><path d="M0 2.5h2M0 4.5h2M0 6.5h2M0 8.5h2M0 10.5h2M0 12.5h2M0 14.5h2" stroke="#404040"/><path d="M2.5 1v14" stroke="#c8c8d8"/><path d="M3 4.5h10M3 6.5h10M3 10.5h10M3 12.5h10" stroke="#88b8d0"/><path d="M5.5 2v7M8.5 2v7M3.5 4h7M3.5 7h7" stroke="#18b018" stroke-width="1.2"/><circle cx="12" cy="12" r="4.2" fill="#d01c24"/><rect x="11" y="9.3" width="2" height="2.6" fill="#fff"/><rect x="11" y="13" width="2" height="1.2" fill="#fff"/></svg>
<div class="t" style="left:238px;top:477px;font-size:11px;line-height:13px;font-weight:normal;color:#000;letter-spacing:-0.1px;">Error</div>
<div class="t" style="left:282px;top:477px;font-size:11px;line-height:13px;font-weight:normal;color:#000;letter-spacing:0.22px;">06/05/2020 4:35:56</div>
<div class="t" style="left:394px;top:477px;font-size:11px;line-height:13px;font-weight:normal;color:#000;letter-spacing:-0.23px;">MILE1.eldia.net</div>
<div class="t" style="left:488px;top:477px;font-size:11px;line-height:13px;font-weight:normal;color:#000;letter-spacing:0px;">1037</div>
<div class="t" style="left:534px;top:477px;font-size:11px;line-height:13px;font-weight:normal;color:#000;letter-spacing:-0.25px;">Recurso de disco físico</div>
<div style="left:236px;top:492px;width:532px;height:17px;background:#e6e6fa;"></div>
<svg style="left:220px;top:492px" width="17" height="17" viewBox="0 0 17 17"><rect x="2" y="0" width="12" height="15" fill="#fff"/><path d="M2 0.5H14M13.5 0.5V15" stroke="#5858c8"/><path d="M2 14.5H14" stroke="#909090"/><path d="M0 2.5h2M0 4.5h2M0 6.5h2M0 8.5h2M0 10.5h2M0 12.5h2M0 14.5h2" stroke="#404040"/><path d="M2.5 1v14" stroke="#c8c8d8"/><path d="M3 4.5h10M3 6.5h10M3 10.5h10M3 12.5h10" stroke="#88b8d0"/><path d="M5.5 2v7M8.5 2v7M3.5 4h7M3.5 7h7" stroke="#18b018" stroke-width="1.2"/><circle cx="12" cy="12" r="4.2" fill="#d01c24"/><rect x="11" y="9.3" width="2" height="2.6" fill="#fff"/><rect x="11" y="13" width="2" height="1.2" fill="#fff"/></svg>
<div class="t" style="left:238px;top:494px;font-size:11px;line-height:13px;font-weight:normal;color:#000;letter-spacing:-0.1px;">Error</div>
<div class="t" style="left:282px;top:494px;font-size:11px;line-height:13px;font-weight:normal;color:#000;letter-spacing:0.22px;">06/05/2020 4:35:56</div>
<div class="t" style="left:394px;top:494px;font-size:11px;line-height:13px;font-weight:normal;color:#000;letter-spacing:-0.23px;">MILE1.eldia.net</div>
<div class="t" style="left:488px;top:494px;font-size:11px;line-height:13px;font-weight:normal;color:#000;letter-spacing:0px;">1038</div>
<div class="t" style="left:534px;top:494px;font-size:11px;line-height:13px;font-weight:normal;color:#000;letter-spacing:-0.25px;">Recurso de disco físico</div>
<svg style="left:220px;top:509px" width="17" height="17" viewBox="0 0 17 17"><rect x="2" y="0" width="12" height="15" fill="#fff"/><path d="M2 0.5H14M13.5 0.5V15" stroke="#5858c8"/><path d="M2 14.5H14" stroke="#909090"/><path d="M0 2.5h2M0 4.5h2M0 6.5h2M0 8.5h2M0 10.5h2M0 12.5h2M0 14.5h2" stroke="#404040"/><path d="M2.5 1v14" stroke="#c8c8d8"/><path d="M3 4.5h10M3 6.5h10M3 10.5h10M3 12.5h10" stroke="#88b8d0"/><path d="M5.5 2v7M8.5 2v7M3.5 4h7M3.5 7h7" stroke="#18b018" stroke-width="1.2"/><circle cx="12" cy="12" r="4.2" fill="#d01c24"/><rect x="11" y="9.3" width="2" height="2.6" fill="#fff"/><rect x="11" y="13" width="2" height="1.2" fill="#fff"/></svg>
<div class="t" style="left:238px;top:511px;font-size:11px;line-height:13px;font-weight:normal;color:#000;letter-spacing:-0.1px;">Error</div>
<div class="t" style="left:282px;top:511px;font-size:11px;line-height:13px;font-weight:normal;color:#000;letter-spacing:0.22px;">06/05/2020 4:35:56</div>
<div class="t" style="left:394px;top:511px;font-size:11px;line-height:13px;font-weight:normal;color:#000;letter-spacing:-0.23px;">MILE1.eldia.net</div>
<div class="t" style="left:488px;top:511px;font-size:11px;line-height:13px;font-weight:normal;color:#000;letter-spacing:0px;">1038</div>
<div class="t" style="left:534px;top:511px;font-size:11px;line-height:13px;font-weight:normal;color:#000;letter-spacing:-0.25px;">Recurso de disco físico</div>
<div style="left:236px;top:526px;width:532px;height:17px;background:#e6e6fa;"></div>
<svg style="left:220px;top:526px" width="17" height="17" viewBox="0 0 17 17"><rect x="2" y="0" width="12" height="15" fill="#fff"/><path d="M2 0.5H14M13.5 0.5V15" stroke="#5858c8"/><path d="M2 14.5H14" stroke="#909090"/><path d="M0 2.5h2M0 4.5h2M0 6.5h2M0 8.5h2M0 10.5h2M0 12.5h2M0 14.5h2" stroke="#404040"/><path d="M2.5 1v14" stroke="#c8c8d8"/><path d="M3 4.5h10M3 6.5h10M3 10.5h10M3 12.5h10" stroke="#88b8d0"/><path d="M5.5 2v7M8.5 2v7M3.5 4h7M3.5 7h7" stroke="#18b018" stroke-width="1.2"/><circle cx="12" cy="12" r="4.2" fill="#d01c24"/><rect x="11" y="9.3" width="2" height="2.6" fill="#fff"/><rect x="11" y="13" width="2" height="1.2" fill="#fff"/></svg>
<div class="t" style="left:238px;top:528px;font-size:11px;line-height:13px;font-weight:normal;color:#000;letter-spacing:-0.1px;">Error</div>
<div class="t" style="left:282px;top:528px;font-size:11px;line-height:13px;font-weight:normal;color:#000;letter-spacing:0.22px;">06/05/2020 4:35:56</div>
<div class="t" style="left:394px;top:528px;font-size:11px;line-height:13px;font-weight:normal;color:#000;letter-spacing:-0.23px;">MILE1.eldia.net</div>
<div class="t" style="left:488px;top:528px;font-size:11px;line-height:13px;font-weight:normal;color:#000;letter-spacing:0px;">1037</div>
<div class="t" style="left:534px;top:528px;font-size:11px;line-height:13px;font-weight:normal;color:#000;letter-spacing:-0.25px;">Recurso de disco físico</div>
<div style="left:220px;top:543px;width:16px;height:1px;background:#4050c0"></div>
<div style="left:787px;top:169px;width:16px;height:16px;background:#c8c6c8;"></div>
<div style="left:787px;top:169px;width:16px;height:1px;background:#ffffff;"></div>
<div style="left:787px;top:169px;width:1px;height:16px;background:#ffffff;"></div>
<div style="left:787px;top:184px;width:16px;height:1px;background:#000000;"></div>
<div style="left:802px;top:169px;width:1px;height:16px;background:#000000;"></div>
<div style="left:788px;top:183px;width:14px;height:1px;background:#848284;"></div>
<div style="left:801px;top:170px;width:1px;height:14px;background:#848284;"></div>
<svg style="left:791px;top:175px" width="7" height="4"><path d="M3.5 0 L7 4 H0Z" fill="#000"/></svg>
<div style="left:787px;top:185px;width:16px;height:344px;background-color:#fff;background-image:linear-gradient(45deg,#c8c6c8 25%,transparent 25%,transparent 75%,#c8c6c8 75%),linear-gradient(45deg,#c8c6c8 25%,transparent 25%,transparent 75%,#c8c6c8 75%);background-size:2px 2px;background-position:0 0,1px 1px"></div>
<div style="left:787px;top:185px;width:16px;height:129px;background:#c8c6c8;"></div>
<div style="left:787px;top:185px;width:16px;height:1px;background:#ffffff;"></div>
<div style="left:787px;top:185px;width:1px;height:129px;background:#ffffff;"></div>
<div style="left:787px;top:313px;width:16px;height:1px;background:#000000;"></div>
<div style="left:802px;top:185px;width:1px;height:129px;background:#000000;"></div>
<div style="left:788px;top:312px;width:14px;height:1px;background:#848284;"></div>
<div style="left:801px;top:186px;width:1px;height:127px;background:#848284;"></div>
<div style="left:787px;top:529px;width:16px;height:15px;background:#c8c6c8;"></div>
<div style="left:787px;top:529px;width:16px;height:1px;background:#ffffff;"></div>
<div style="left:787px;top:529px;width:1px;height:15px;background:#ffffff;"></div>
<div style="left:787px;top:543px;width:16px;height:1px;background:#000000;"></div>
<div style="left:802px;top:529px;width:1px;height:15px;background:#000000;"></div>
<div style="left:788px;top:542px;width:14px;height:1px;background:#848284;"></div>
<div style="left:801px;top:530px;width:1px;height:13px;background:#848284;"></div>
<svg style="left:791px;top:534px" width="7" height="4"><path d="M0 0 H7 L3.5 4Z" fill="#000"/></svg>
<div style="left:214px;top:554px;width:591px;height:1px;background:#848284;"></div>
<div style="left:214px;top:554px;width:1px;height:211px;background:#848284;"></div>
<div style="left:215px;top:555px;width:589px;height:1px;background:#000000;"></div>
<div style="left:215px;top:555px;width:1px;height:209px;background:#000000;"></div>
<div style="left:214px;top:764px;width:591px;height:1px;background:#ffffff;"></div>
<div style="left:804px;top:554px;width:1px;height:211px;background:#ffffff;"></div>
<div style="left:216px;top:556px;width:588px;height:208px;background:#c8c6c8;"></div>
<div style="left:216px;top:556px;width:587px;height:26px;background:#848284;"></div>
<div class="t" style="left:220px;top:563px;font-size:12px;line-height:14px;font-weight:bold;color:#fff;letter-spacing:0.05px;">Detalles de evento</div>
<div class="t" style="left:222px;top:590px;font-size:11px;line-height:13px;font-weight:normal;color:#000;letter-spacing:-0.25px;">Registro:</div>
<div class="t" style="left:308px;top:590px;font-size:11px;line-height:13px;font-weight:normal;color:#000;letter-spacing:-0.3px;">System</div>
<div class="t" style="left:222px;top:609px;font-size:11px;line-height:13px;font-weight:normal;color:#000;letter-spacing:-0.25px;">Origen:</div>
<div class="t" style="left:308px;top:609px;font-size:11px;line-height:13px;font-weight:normal;color:#000;letter-spacing:-0.3px;">FailoverClustering</div>
<div class="t" style="left:222px;top:628px;font-size:11px;line-height:13px;font-weight:normal;color:#000;letter-spacing:-0.25px;">Id. de evento:</div>
<div class="t" style="left:308px;top:628px;font-size:11px;line-height:13px;font-weight:normal;color:#000;letter-spacing:-0.3px;">1069</div>
<div class="t" style="left:222px;top:647px;font-size:11px;line-height:13px;font-weight:normal;color:#000;letter-spacing:-0.25px;">Nivel:</div>
<div class="t" style="left:308px;top:647px;font-size:11px;line-height:13px;font-weight:normal;color:#000;letter-spacing:-0.3px;">Error</div>
<div class="t" style="left:222px;top:666px;font-size:11px;line-height:13px;font-weight:normal;color:#000;letter-spacing:-0.25px;">Usuario:</div>
<div class="t" style="left:308px;top:666px;font-size:11px;line-height:13px;font-weight:normal;color:#000;letter-spacing:-0.3px;">SYSTEM</div>
<div class="t" style="left:222px;top:685px;font-size:11px;line-height:13px;font-weight:normal;color:#000;letter-spacing:-0.25px;">Código:</div>
<div class="t" style="left:308px;top:685px;font-size:11px;line-height:13px;font-weight:normal;color:#000;letter-spacing:-0.3px;">Información</div>
<div class="t" style="left:511px;top:609px;font-size:11px;line-height:13px;font-weight:normal;color:#000;letter-spacing:-0.25px;">Registrado:</div>
<div class="t" style="left:599px;top:609px;font-size:11px;line-height:13px;font-weight:normal;color:#000;letter-spacing:0.2px;">06/05/2020 10:01:03</div>
<div class="t" style="left:511px;top:628px;font-size:11px;line-height:13px;font-weight:normal;color:#000;letter-spacing:-0.25px;">Categ. tarea:</div>
<div class="t" style="left:599px;top:628px;font-size:11px;line-height:13px;font-weight:normal;color:#000;letter-spacing:-0.25px;">Administrador de control de recursos</div>
<div class="t" style="left:511px;top:647px;font-size:11px;line-height:13px;font-weight:normal;color:#000;letter-spacing:-0.25px;">Palabras clave:</div>
<div class="t" style="left:511px;top:666px;font-size:11px;line-height:13px;font-weight:normal;color:#000;letter-spacing:-0.25px;">Nodo:</div>
<div class="t" style="left:599px;top:666px;font-size:11px;line-height:13px;font-weight:normal;color:#000;letter-spacing:-0.25px;">MILE2.eldia.net</div>
<div style="left:221px;top:706px;width:576px;height:1px;background:#000000;"></div>
<div style="left:221px;top:706px;width:1px;height:34px;background:#000000;"></div>
<div style="left:221px;top:739px;width:576px;height:1px;background:#ffffff;"></div>
<div style="left:796px;top:706px;width:1px;height:34px;background:#ffffff;"></div>
<div class="t" style="left:224px;top:709px;font-size:11px;line-height:13px;font-weight:normal;color:#000;letter-spacing:-0.2px;">Error en el recurso de clúster 'Milenium Search Server' en el servicio o aplicación en clúster 'DIA_APLICATIONS'.</div>
<div style="left:6px;top:128px;width:187px;height:620px;overflow:hidden">
<div class="t" style="position:absolute;left:24px;top:2px;font-size:11px;line-height:13px;letter-spacing:-0.09px">Administración de clúster de conmutación por error</div>
<div class="t" style="position:absolute;left:43px;top:18px;font-size:11px;line-height:13px;letter-spacing:-0.09px">DIA_CLUSTER.eldia.net</div>
<div class="t" style="position:absolute;left:62px;top:34px;font-size:11px;line-height:13px;letter-spacing:-0.09px">Servicios y Aplicaciones</div>
<div class="t" style="position:absolute;left:81px;top:50px;font-size:11px;line-height:13px;letter-spacing:-0.09px">DIA_APLICATIONS</div>
<div class="t" style="position:absolute;left:81px;top:66px;font-size:11px;line-height:13px;letter-spacing:-0.09px">DIA_BACKUP</div>
<div class="t" style="position:absolute;left:81px;top:82px;font-size:11px;line-height:13px;letter-spacing:-0.09px">DIA_MILENIUM</div>
<div class="t" style="position:absolute;left:62px;top:98px;font-size:11px;line-height:13px;letter-spacing:-0.09px">Nodos</div>
<div class="t" style="position:absolute;left:62px;top:114px;font-size:11px;line-height:13px;letter-spacing:-0.09px">Almacenamiento</div>
<div class="t" style="position:absolute;left:62px;top:130px;font-size:11px;line-height:13px;letter-spacing:-0.09px">Redes</div>
<div style="position:absolute;left:60px;top:144px;width:92px;height:16px;background:#c8c6c8"></div>
<div class="t" style="position:absolute;left:62px;top:146px;font-size:11px;line-height:13px;letter-spacing:-0.09px">Eventos de clúster</div>
</div>
<svg style="left:9px;top:128px" width="17" height="16"><rect x="0.5" y="1.5" width="4" height="9" fill="#c4ccd4" stroke="#68707a"/><rect x="1" y="2" width="3" height="1.5" fill="#2a3a40"/><path d="M1 4.5h3M1 6.5h3" stroke="#f4f8fc"/><rect x="1.5" y="7" width="1.5" height="2" fill="#20d020"/><rect x="5.5" y="0.5" width="4" height="8" fill="#c4ccd4" stroke="#68707a"/><rect x="6" y="1" width="3" height="1.5" fill="#2a3a40"/><path d="M6 3.5h3M6 5.5h3" stroke="#f4f8fc"/><rect x="6.5" y="5" width="1.5" height="2" fill="#20d020"/><rect x="10.5" y="1.5" width="4" height="9" fill="#c4ccd4" stroke="#68707a"/><rect x="11" y="2" width="3" height="1.5" fill="#2a3a40"/><path d="M11 4.5h3M11 6.5h3" stroke="#f4f8fc"/><rect x="11.5" y="7" width="1.5" height="2" fill="#20d020"/><rect x="3.5" y="6.5" width="4" height="8" fill="#c4ccd4" stroke="#68707a"/><rect x="4" y="7" width="3" height="1.5" fill="#2a3a40"/><path d="M4 9.5h3M4 11.5h3" stroke="#f4f8fc"/><rect x="6.5" y="10.5" width="10" height="5" fill="#98a4ac" stroke="#5a646c"/><path d="M9.5 10.5v-1.5h4v1.5" stroke="#303840" fill="none"/><path d="M7 12.5h9" stroke="#c8d0d8"/><rect x="11" y="12" width="1" height="2" fill="#fff"/><circle cx="10.5" cy="8.5" r="0.8" fill="#c0d020"/><circle cx="14" cy="8.5" r="0.8" fill="#c0d020"/></svg>
<svg style="left:13px;top:148px" width="9" height="9"><rect x="0.5" y="0.5" width="8" height="8" fill="#fff" stroke="#808080"/><path d="M2 4.5h5" stroke="#000"/></svg>
<svg style="left:28px;top:144px" width="17" height="17"><rect x="0.5" y="1.5" width="4" height="9" fill="#c4ccd4" stroke="#68707a"/><rect x="1" y="2" width="3" height="1.5" fill="#2a3a40"/><path d="M1 4.5h3M1 6.5h3" stroke="#f4f8fc"/><rect x="1.5" y="7" width="1.5" height="2" fill="#20d020"/><rect x="5.5" y="0.5" width="4" height="3" fill="#c4ccd4" stroke="#68707a"/><rect x="6" y="1" width="3" height="1.5" fill="#2a3a40"/><path d="M6 3.5h3M6 5.5h3" stroke="#f4f8fc"/><rect x="11.5" y="1.5" width="4" height="3" fill="#c4ccd4" stroke="#68707a"/><rect x="12" y="2" width="3" height="1.5" fill="#2a3a40"/><path d="M12 4.5h3M12 6.5h3" stroke="#f4f8fc"/><rect x="3.5" y="6.5" width="3" height="8" fill="#c4ccd4" stroke="#68707a"/><rect x="4" y="7" width="2" height="1.5" fill="#2a3a40"/><path d="M4 9.5h2M4 11.5h2" stroke="#f4f8fc"/><rect x="6.5" y="4.5" width="9" height="12" fill="#fff" stroke="#8a8a8a"/><path d="M11.5 5 L14.5 10 H8.5Z" fill="#f0cc10" stroke="#c0a000" stroke-width="0.6"/><rect x="11" y="7" width="1" height="2" fill="#303030"/><circle cx="9.5" cy="13.5" r="2.7" fill="#d02028"/><path d="M8.6 12.6l1.8 1.8M10.4 12.6l-1.8 1.8" stroke="#fff" stroke-width="0.9"/></svg>
<svg style="left:32px;top:164px" width="9" height="9"><rect x="0.5" y="0.5" width="8" height="8" fill="#fff" stroke="#808080"/><path d="M2 4.5h5" stroke="#000"/></svg>
<svg style="left:47px;top:160px" width="17" height="17"><rect x="0.5" y="0.5" width="12" height="10" fill="#f8f8fc" stroke="#808898"/><rect x="1" y="1" width="11" height="2" fill="#7c8ca4"/><path d="M9 2h1M11 2h0.5" stroke="#fff"/><rect x="2.5" y="3.5" width="13" height="12" fill="#f8f8fc" stroke="#808898"/><rect x="3" y="4" width="12" height="2" fill="#7c8ca4"/><path d="M12 5h1M14 5h0.5" stroke="#fff"/><path d="M4 7v7" stroke="#e0e0f0"/><circle cx="11" cy="12" r="3.4" fill="#9cc4e8" stroke="#5a88c0" stroke-dasharray="1.2 0.8"/><circle cx="11" cy="12" r="1.3" fill="#fff"/></svg>
<svg style="left:66px;top:176px" width="17" height="17"><rect x="0.5" y="0.5" width="12" height="10" fill="#f8f8fc" stroke="#808898"/><rect x="1" y="1" width="11" height="2" fill="#7c8ca4"/><path d="M9 2h1M11 2h0.5" stroke="#fff"/><rect x="2.5" y="3.5" width="13" height="12" fill="#f8f8fc" stroke="#808898"/><rect x="3" y="4" width="12" height="2" fill="#7c8ca4"/><path d="M12 5h1M14 5h0.5" stroke="#fff"/><path d="M4 7v7" stroke="#e0e0f0"/><circle cx="11" cy="12" r="3.4" fill="#9cc4e8" stroke="#5a88c0" stroke-dasharray="1.2 0.8"/><circle cx="11" cy="12" r="1.3" fill="#fff"/></svg>
<svg style="left:66px;top:192px" width="17" height="17"><rect x="0.5" y="0.5" width="12" height="10" fill="#f8f8fc" stroke="#808898"/><rect x="1" y="1" width="11" height="2" fill="#7c8ca4"/><path d="M9 2h1M11 2h0.5" stroke="#fff"/><rect x="2.5" y="3.5" width="13" height="12" fill="#f8f8fc" stroke="#808898"/><rect x="3" y="4" width="12" height="2" fill="#7c8ca4"/><path d="M12 5h1M14 5h0.5" stroke="#fff"/><path d="M4 7v7" stroke="#e0e0f0"/><circle cx="11" cy="12" r="3.4" fill="#9cc4e8" stroke="#5a88c0" stroke-dasharray="1.2 0.8"/><circle cx="11" cy="12" r="1.3" fill="#fff"/></svg>
<svg style="left:66px;top:208px" width="17" height="17"><rect x="0.5" y="0.5" width="12" height="10" fill="#f8f8fc" stroke="#808898"/><rect x="1" y="1" width="11" height="2" fill="#7c8ca4"/><path d="M9 2h1M11 2h0.5" stroke="#fff"/><rect x="2.5" y="3.5" width="13" height="12" fill="#f8f8fc" stroke="#808898"/><rect x="3" y="4" width="12" height="2" fill="#7c8ca4"/><path d="M12 5h1M14 5h0.5" stroke="#fff"/><path d="M4 7v7" stroke="#e0e0f0"/><circle cx="11" cy="12" r="3.4" fill="#9cc4e8" stroke="#5a88c0" stroke-dasharray="1.2 0.8"/><circle cx="11" cy="12" r="1.3" fill="#fff"/></svg>
<svg style="left:32px;top:228px" width="9" height="9"><rect x="0.5" y="0.5" width="8" height="8" fill="#fff" stroke="#808080"/><path d="M2 4.5h5M4.5 2v5" stroke="#000"/></svg>
<svg style="left:47px;top:224px" width="16" height="17"><path d="M0.5 2.5h4l1-1.5h5v11h-10z" fill="#f4dc96" stroke="#d8b868"/><path d="M0.5 4.5h10v8h-10z" fill="#f8e6a8" stroke="#d8b868"/><rect x="6" y="0.5" width="3" height="2" fill="#60a0e0"/><rect x="8.5" y="2.5" width="4" height="9" fill="#c4ccd4" stroke="#68707a"/><rect x="9" y="3" width="3" height="1.5" fill="#2a3a40"/><path d="M9 5.5h3M9 7.5h3" stroke="#f4f8fc"/><rect x="9.5" y="8" width="1.5" height="2" fill="#20d020"/><rect x="4.5" y="5.5" width="4" height="10" fill="#c4ccd4" stroke="#68707a"/><rect x="5" y="6" width="3" height="1.5" fill="#2a3a40"/><path d="M5 8.5h3M5 10.5h3" stroke="#f4f8fc"/><rect x="5.5" y="12" width="1.5" height="2" fill="#20d020"/></svg>
<svg style="left:47px;top:240px" width="16" height="16"><path d="M0.5 3.5h4l1-2h7v11h-12z" fill="#f4dc96" stroke="#d8b860"/><rect x="2.5" y="9.5" width="13" height="5" rx="2.5" fill="#e0e0e8" stroke="#707078"/><circle cx="12.5" cy="12" r="1" fill="#30c030"/></svg>
<svg style="left:32px;top:260px" width="9" height="9"><rect x="0.5" y="0.5" width="8" height="8" fill="#fff" stroke="#808080"/><path d="M2 4.5h5M4.5 2v5" stroke="#000"/></svg>
<svg style="left:47px;top:256px" width="16" height="17"><path d="M0.5 2.5h4l1-1.5h5v11h-10z" fill="#f4dc96" stroke="#d8b868"/><path d="M0.5 4.5h10v8h-10z" fill="#f8e6a8" stroke="#d8b868"/><rect x="6" y="0.5" width="3" height="2" fill="#60a0e0"/><rect x="4.5" y="3.5" width="4" height="9" fill="#c4ccd4" stroke="#68707a"/><rect x="5" y="4" width="3" height="1.5" fill="#2a3a40"/><path d="M5 6.5h3M5 8.5h3" stroke="#f4f8fc"/><rect x="5.5" y="9" width="1.5" height="2" fill="#20d020"/><rect x="9.5" y="3.5" width="4" height="9" fill="#c4ccd4" stroke="#68707a"/><rect x="10" y="4" width="3" height="1.5" fill="#2a3a40"/><path d="M10 6.5h3M10 8.5h3" stroke="#f4f8fc"/><rect x="10.5" y="9" width="1.5" height="2" fill="#20d020"/><path d="M9 13v2M2.5 15h11" stroke="#20c060" stroke-width="1.6"/></svg>
<svg style="left:47px;top:272px" width="16" height="16"><rect x="2.5" y="0.5" width="11" height="15" fill="#fff" stroke="#202020"/><path d="M1 2v12" stroke="#404040" stroke-dasharray="1 1"/><path d="M5 3v4M5 8v1" stroke="#e02020" stroke-width="1.3"/><path d="M9 2v1M9 4v4" stroke="#2040e0" stroke-width="1.3"/><path d="M8 9.5q1-1.5 2 0q0 1-1 2v1" stroke="#a020a0" fill="none"/><path d="M4 13h8" stroke="#c0c0c0"/></svg>
<div style="left:6px;top:749px;width:187px;height:15px;background:#fff;"></div>
<div style="left:6px;top:749px;width:187px;height:15px;background-color:#fff;background-image:linear-gradient(45deg,#c8c6c8 25%,transparent 25%,transparent 75%,#c8c6c8 75%),linear-gradient(45deg,#c8c6c8 25%,transparent 25%,transparent 75%,#c8c6c8 75%);background-size:2px 2px;background-position:0 0,1px 1px"></div>
<div style="left:6px;top:749px;width:16px;height:16px;background:#c8c6c8;"></div>
<div style="left:6px;top:749px;width:16px;height:1px;background:#ffffff;"></div>
<div style="left:6px;top:749px;width:1px;height:16px;background:#ffffff;"></div>
<div style="left:6px;top:764px;width:16px;height:1px;background:#000000;"></div>
<div style="left:21px;top:749px;width:1px;height:16px;background:#000000;"></div>
<div style="left:7px;top:763px;width:14px;height:1px;background:#848284;"></div>
<div style="left:20px;top:750px;width:1px;height:14px;background:#848284;"></div>
<svg style="left:11px;top:753px" width="4" height="7"><path d="M4 0 V7 L0 3.5Z" fill="#000"/></svg>
<div style="left:22px;top:749px;width:110px;height:16px;background:#c8c6c8;"></div>
<div style="left:22px;top:749px;width:110px;height:1px;background:#ffffff;"></div>
<div style="left:22px;top:749px;width:1px;height:16px;background:#ffffff;"></div>
<div style="left:22px;top:764px;width:110px;height:1px;background:#000000;"></div>
<div style="left:131px;top:749px;width:1px;height:16px;background:#000000;"></div>
<div style="left:23px;top:763px;width:108px;height:1px;background:#848284;"></div>
<div style="left:130px;top:750px;width:1px;height:14px;background:#848284;"></div>
<div style="left:177px;top:749px;width:16px;height:16px;background:#c8c6c8;"></div>
<div style="left:177px;top:749px;width:16px;height:1px;background:#ffffff;"></div>
<div style="left:177px;top:749px;width:1px;height:16px;background:#ffffff;"></div>
<div style="left:177px;top:764px;width:16px;height:1px;background:#000000;"></div>
<div style="left:192px;top:749px;width:1px;height:16px;background:#000000;"></div>
<div style="left:178px;top:763px;width:14px;height:1px;background:#848284;"></div>
<div style="left:191px;top:750px;width:1px;height:14px;background:#848284;"></div>
<svg style="left:183px;top:753px" width="4" height="7"><path d="M0 0 V7 L4 3.5Z" fill="#000"/></svg>
<div style="left:826px;top:128px;width:193px;height:17px;background:#c8c6c8;"></div>
<div style="left:826px;top:128px;width:193px;height:1px;background:#ffffff;"></div>
<div style="left:826px;top:144px;width:193px;height:1px;background:#848284;"></div>
<div style="left:826px;top:145px;width:193px;height:1px;background:#ffffff;"></div>
<div style="left:826px;top:146px;width:193px;height:25px;background:#c8c6c8;"></div>
<div class="t" style="left:831px;top:130px;font-size:12px;line-height:14px;font-weight:bold;color:#000;letter-spacing:-0.15px;">Acciones</div>
<div class="t" style="left:833px;top:152px;font-size:12px;line-height:14px;font-weight:bold;color:#000;letter-spacing:-0.1px;">Eventos de clúster</div>
<svg style="left:1005px;top:157px" width="7" height="4"><path d="M3.5 0 L7 4 H0Z" fill="#000"/></svg>
<div class="t" style="left:856px;top:176px;font-size:11px;line-height:13px;font-weight:normal;color:#000;letter-spacing:-0.25px;">Consulta</div>
<div class="t" style="left:856px;top:200px;font-size:11px;line-height:13px;font-weight:normal;color:#000;letter-spacing:-0.25px;">Guardar consulta</div>
<div class="t" style="left:856px;top:224px;font-size:11px;line-height:13px;font-weight:normal;color:#000;letter-spacing:-0.25px;">Abrir consulta</div>
<div class="t" style="left:856px;top:248px;font-size:11px;line-height:13px;font-weight:normal;color:#000;letter-spacing:-0.25px;">Buscar</div>
<div class="t" style="left:856px;top:272px;font-size:11px;line-height:13px;font-weight:normal;color:#000;letter-spacing:-0.25px;">Agregar o quitar columnas</div>
<div class="t" style="left:856px;top:297px;font-size:11px;line-height:13px;font-weight:normal;color:#000;letter-spacing:-0.25px;">Actualizar</div>
<div class="t" style="left:856px;top:322px;font-size:11px;line-height:13px;font-weight:normal;color:#000;letter-spacing:-0.25px;">Ver</div>
<div class="t" style="left:856px;top:347px;font-size:11px;line-height:13px;font-weight:normal;color:#000;letter-spacing:-0.25px;">Ayuda</div>
<div style="left:831px;top:291px;width:183px;height:1px;background:#a0a0a0;"></div>
<div style="left:831px;top:316px;width:183px;height:1px;background:#a0a0a0;"></div>
<div style="left:831px;top:341px;width:183px;height:1px;background:#a0a0a0;"></div>
<svg style="left:1006px;top:324px" width="4" height="8"><path d="M0 0 V8 L4 4Z" fill="#000"/></svg>
<svg style="left:831px;top:175px" width="17" height="16"><rect x="2.5" y="0.5" width="3" height="3" fill="#d0d8e0" stroke="#7080a0" stroke-width="0.7"/><rect x="7" y="0" width="3" height="3" fill="#d0d8e0" stroke="#7080a0" stroke-width="0.7"/><rect x="11.5" y="0.5" width="3" height="3" fill="#d0d8e0" stroke="#7080a0" stroke-width="0.7"/><path d="M0.5 3.5h16l-6 6v6h-4v-6z" fill="#a8c0d8" stroke="#607890"/><path d="M2 5h13" stroke="#e8f0f8"/><circle cx="4" cy="9" r="1" fill="#30c030"/><circle cx="12" cy="10" r="1" fill="#30c030"/></svg>
<svg style="left:831px;top:199px" width="17" height="16"><path d="M0.5 1.5q0-1 1-1h13l1.5 1.5v13q0 1-1 1h-13.5q-1 0-1-1z" fill="#404040" stroke="#202020"/><rect x="3" y="1" width="10" height="7" fill="#f0f0f4"/><rect x="4" y="10" width="8" height="5" fill="#c0c0c0"/><rect x="5" y="11" width="2" height="3" fill="#303030"/></svg>
<svg style="left:831px;top:223px" width="16" height="16"><path d="M0.5 4.5h4l1-1.5h9v12.5h-14z" fill="#f0d890" stroke="#c0a060"/><path d="M0.5 7.5h14v8h-14z" fill="#f8e4a8" stroke="#c0a060"/><path d="M4 2 Q8 1 9 6 L11 5 L8.5 10 L5 6 L7 6 Q7 4 4 3Z" fill="#40c040" stroke="#209020" stroke-width="0.6"/></svg>
<svg style="left:831px;top:247px" width="17" height="16"><rect x="2.5" y="0.5" width="9" height="11" fill="#fff" stroke="#6080c0"/><path d="M4 3h5M4 5h6M4 7h5" stroke="#4070d0"/><ellipse cx="5" cy="12.5" rx="4.5" ry="2.5" fill="#e8f0ff" stroke="#5080c8"/><path d="M9 7.5h3v-3l4.5 5l-4.5 5v-3h-3z" fill="#3080e0" stroke="#2060b0" stroke-width="0.6"/></svg>
<svg style="left:831px;top:271px" width="16" height="16"><rect x="0.5" y="0.5" width="15" height="14" fill="#fff" stroke="#5080c0"/><rect x="1" y="1" width="14" height="2.5" fill="#4880d0"/><path d="M3 6h3M3 8h3M3 10h3M3 12h3M10 6h3M10 8h3M10 10h3M10 12h3" stroke="#6090d0"/><rect x="7" y="5" width="2" height="8" fill="#f0a020"/></svg>
<svg style="left:831px;top:296px" width="16" height="16"><path d="M6.5 14.5 A6 6 0 1 1 13.5 10" stroke="#40c040" stroke-width="2.2" fill="none"/><path d="M9 9h7l-3.5 5z" fill="#20a020"/></svg>
<svg style="left:832px;top:346px" width="14" height="16"><rect x="0.5" y="0.5" width="13" height="15" fill="#5a7ee0" stroke="#1c3488"/><rect x="1" y="1" width="2.5" height="14" fill="#2a48b0"/><path d="M5.2 5.2 Q5.4 2.6 7.8 2.6 Q10.4 2.8 10.2 5.2 Q10 6.8 8.2 7.8 L8 10" stroke="#fff" stroke-width="1.6" fill="none"/><rect x="7" y="11.5" width="2" height="2" fill="#fff"/></svg>
<svg style="left:9px;top:104px" width="17" height="15"><defs><linearGradient id="gb" x1="0" y1="0" x2="0" y2="1"><stop offset="0" stop-color="#9ee0ff"/><stop offset="1" stop-color="#1a80d8"/></linearGradient></defs><path d="M0.5 7.5 L7.5 0.5 V4.5 H16.5 V10.5 H7.5 V14.5Z" fill="url(#gb)" stroke="#3a8ad8"/></svg>
<svg style="left:32px;top:104px" width="17" height="15"><defs><linearGradient id="gg" x1="0" y1="0" x2="0" y2="1"><stop offset="0" stop-color="#d0d0d0"/><stop offset="1" stop-color="#808080"/></linearGradient></defs><path d="M16.5 7.5 L9.5 0.5 V4.5 H0.5 V10.5 H9.5 V14.5Z" fill="url(#gg)" stroke="#606060"/></svg>
<div style="left:56px;top:102px;width:1px;height:19px;background:#848284;"></div>
<div style="left:57px;top:102px;width:1px;height:19px;background:#ffffff;"></div>
<svg style="left:64px;top:103px" width="15" height="16"><path d="M0.5 5.5h5l1-1.5h8v11.5h-14z" fill="#f4d890" stroke="#c8a050"/><path d="M0.5 8.5h14v7h-14z" fill="#f8e4a8" stroke="#c8a050"/><path d="M4 9 Q5 4 10 3 L9 1 L13 3 L10 6 L10 4.5 Q6 5 5 9Z" fill="#30b030" stroke="#108010" stroke-width="0.6"/></svg>
<div style="left:83px;top:100px;width:23px;height:22px;background-color:#fff;background-image:linear-gradient(45deg,#c8c6c8 25%,transparent 25%,transparent 75%,#c8c6c8 75%),linear-gradient(45deg,#c8c6c8 25%,transparent 25%,transparent 75%,#c8c6c8 75%);background-size:2px 2px;background-position:0 0,1px 1px;"></div>
<div style="left:83px;top:100px;width:23px;height:1px;background:#848284;"></div>
<div style="left:83px;top:100px;width:1px;height:22px;background:#848284;"></div>
<div style="left:83px;top:121px;width:23px;height:1px;background:#ffffff;"></div>
<div style="left:105px;top:100px;width:1px;height:22px;background:#ffffff;"></div>
<svg style="left:87px;top:106px" width="16" height="13"><rect x="0.5" y="0.5" width="15" height="12" fill="#f6f6f6" stroke="#7c8890"/><path d="M1 2.5h10" stroke="#c0c8d8"/><rect x="12" y="2" width="1" height="1" fill="#7c8890"/><rect x="14" y="2" width="1" height="1" fill="#7c8890"/><path d="M1 4.5h14M4.5 5v7" stroke="#8090a0"/><path d="M2 6.5h1.5M2 8.5h1.5M2 10.5h1.5" stroke="#3070d0"/><path d="M11 6 L7 8.5 L11 11Z" fill="#20b020"/></svg>
<div style="left:110px;top:102px;width:1px;height:19px;background:#848284;"></div>
<div style="left:111px;top:102px;width:1px;height:19px;background:#ffffff;"></div>
<svg style="left:118px;top:103px" width="14" height="16"><rect x="0.5" y="0.5" width="13" height="15" fill="#5a7ee0" stroke="#1c3488"/><rect x="1" y="1" width="2.5" height="14" fill="#2a48b0"/><path d="M5.2 5.2 Q5.4 2.6 7.8 2.6 Q10.4 2.8 10.2 5.2 Q10 6.8 8.2 7.8 L8 10" stroke="#fff" stroke-width="1.6" fill="none"/><rect x="7" y="11.5" width="2" height="2" fill="#fff"/></svg>
<div style="left:137px;top:100px;width:23px;height:22px;background-color:#fff;background-image:linear-gradient(45deg,#c8c6c8 25%,transparent 25%,transparent 75%,#c8c6c8 75%),linear-gradient(45deg,#c8c6c8 25%,transparent 25%,transparent 75%,#c8c6c8 75%);background-size:2px 2px;background-position:0 0,1px 1px;"></div>
<div style="left:137px;top:100px;width:23px;height:1px;background:#848284;"></div>
<div style="left:137px;top:100px;width:1px;height:22px;background:#848284;"></div>
<div style="left:137px;top:121px;width:23px;height:1px;background:#ffffff;"></div>
<div style="left:159px;top:100px;width:1px;height:22px;background:#ffffff;"></div>
<svg style="left:141px;top:106px" width="16" height="13"><rect x="0.5" y="0.5" width="15" height="12" fill="#f6f6f6" stroke="#7c8890"/><path d="M1 2.5h10" stroke="#c0c8d8"/><rect x="12" y="2" width="1" height="1" fill="#7c8890"/><rect x="14" y="2" width="1" height="1" fill="#7c8890"/><path d="M1 4.5h14M11.5 5v7" stroke="#8090a0"/><path d="M12.5 6.5h1.5M12.5 8.5h1.5M12.5 10.5h1.5" stroke="#3070d0"/><path d="M5 6 L9 8.5 L5 11Z" fill="#20b020"/></svg>
<svg style="left:5px;top:56px" width="17" height="16"><rect x="0.5" y="0.5" width="4" height="12" fill="#d0d4d8" stroke="#6a7078"/><rect x="5.5" y="0.5" width="4" height="12" fill="#e0e4e8" stroke="#6a7078"/><rect x="10.5" y="0.5" width="4" height="11" fill="#d0d4d8" stroke="#6a7078"/><path d="M1.5 3h3M6.5 3h3M11.5 3h3M1.5 5h3M6.5 5h3M11.5 5h3" stroke="#fff"/><rect x="5.5" y="9.5" width="11" height="6" fill="#8a9098" stroke="#50565e"/><circle cx="2.5" cy="10" r="1" fill="#30c030"/></svg>
<svg style="left:3px;top:28px" width="17" height="17"><defs><linearGradient id="sb1" x1="0" y1="0" x2="1" y2="1"><stop offset="0" stop-color="#a8f0ff"/><stop offset="1" stop-color="#0898f0"/></linearGradient></defs><rect x="1.5" y="0.5" width="14" height="11" fill="#fff" stroke="#909090"/><rect x="2.5" y="1.5" width="12" height="9" fill="url(#sb1)"/><rect x="0.5" y="10.5" width="12" height="5" fill="#f4f4f4" stroke="#909090"/><path d="M2 12.5l1.5 1.5M3.5 12.5l-1.5 1.5M5 12.5l1.5 1.5M6.5 12.5l-1.5 1.5M9 12.5l-1.5 1l1.5 1" stroke="#303030" stroke-width="0.8"/><rect x="13.5" y="10.5" width="2" height="5" fill="#f4f4f4" stroke="#909090"/></svg>
<svg style="left:26px;top:28px" width="17" height="15"><defs><linearGradient id="sb2" x1="0" y1="0" x2="1" y2="1"><stop offset="0" stop-color="#a8f0ff"/><stop offset="1" stop-color="#0898f0"/></linearGradient></defs><rect x="0.5" y="0.5" width="15" height="13" rx="1" fill="#fff" stroke="#909090"/><rect x="2" y="2" width="12" height="10" fill="url(#sb2)"/></svg>
<svg style="left:49px;top:28px" width="17" height="16"><rect x="0.5" y="0.5" width="15" height="14" rx="1" fill="#e8f4ff" stroke="#5090d8"/><rect x="1" y="1" width="14" height="3" fill="#60b0f0"/><path d="M3 7l3 2l-3 2" stroke="#2060b0" stroke-width="1.5" fill="none"/><path d="M7 11.5h5" stroke="#2060b0" stroke-width="1.2"/></svg>
<svg style="left:72px;top:28px" width="17" height="17"><path d="M5 0.5 L9.5 5 H7 V10 H3 V5 H0.5Z" fill="#70d020" stroke="#40a010" stroke-width="0.8"/><path d="M12 16 L16.5 11.5 H14 V6.5 H10 V11.5 H7.5Z" fill="#40b8f8" stroke="#2088d0" stroke-width="0.8"/></svg>
<svg style="left:95px;top:28px" width="17" height="16"><defs><linearGradient id="og" x1="0" y1="0" x2="0" y2="1"><stop offset="0" stop-color="#ffc830"/><stop offset="1" stop-color="#f07000"/></linearGradient></defs><rect x="0.5" y="0.5" width="15" height="15" rx="1.5" fill="url(#og)" stroke="#d06000"/><circle cx="8" cy="8" r="4.5" fill="none" stroke="#fff" stroke-width="1.5"/><path d="M8 5v4" stroke="#fff" stroke-width="1.6"/></svg>
<svg style="left:117px;top:28px" width="18" height="17"><path d="M0.5 1.5h10v7h-5l-2 3v-3h-3z" fill="#b8e0ff" stroke="#4888d0" stroke-width="0.9"/><path d="M6.5 5.5h10v7h-2v3l-3-3h-5z" fill="#70d030" stroke="#30a010" stroke-width="0.9"/></svg>
<svg style="left:140px;top:28px" width="18" height="17"><path d="M2 2 Q0 4 3 8 Q7 14 12 15 Q14 15 15 13 L12 10 L10 11 Q7 9 5 6 L6 4 L3 1Z" fill="#40c0f0" stroke="#2088c8" stroke-width="0.9"/><path d="M14 15l2 1" stroke="#2088c8"/></svg>
<svg style="left:163px;top:28px" width="18" height="16"><path d="M0.5 0.5h16v10h-8l-3 4v-4h-5z" fill="#d8f0ff" stroke="#4890d8"/><path d="M3 3h11M3 5h11M3 7h9" stroke="#80b8e8"/></svg>
<div style="left:187px;top:27px;width:1px;height:19px;background:#808080;"></div>
<div style="left:188px;top:27px;width:1px;height:19px;background:#ffffff;"></div>
<svg style="left:196px;top:28px" width="15" height="17"><path d="M5 0.5h5v3h3l-5.5 5l-5.5-5h3z" fill="#20c8ff" stroke="#1090e0" stroke-width="0.8"/><rect x="0.5" y="8.5" width="13" height="7" rx="1.5" fill="#f0f0f0" stroke="#909090"/></svg>
<svg style="left:218px;top:28px" width="17" height="16"><rect x="4.5" y="0.5" width="7" height="7" rx="1" fill="#f0f0f0" stroke="#909090"/><rect x="0.5" y="8.5" width="7" height="7" rx="1" fill="#f0f0f0" stroke="#909090"/><rect x="8.5" y="8.5" width="7" height="7" rx="1" fill="#f0f0f0" stroke="#909090"/><path d="M6.5 6V2.5h3V6M6.5 4.5h3M6 10.5h-2.5v3H6M10.5 10v4h1.5l1-1v-2l-1-1z" stroke="#707070" fill="none" stroke-width="0.8"/></svg>
<svg style="left:242px;top:28px" width="16" height="17"><defs><linearGradient id="yc1" x1="0" y1="0" x2="0" y2="1"><stop offset="0" stop-color="#ffe060"/><stop offset="1" stop-color="#e0a000"/></linearGradient></defs><rect x="0.5" y="1.5" width="14" height="14" rx="1.5" fill="url(#yc1)" stroke="#b88000"/><rect x="3.5" y="0.5" width="8" height="3" fill="#e8e8e8" stroke="#909090"/><path d="M6 5h3v3h2.5l-4 4.5l-4-4.5h2.5z" fill="#20c8ff" stroke="#1090e0" stroke-width="0.6"/></svg>
<svg style="left:265px;top:28px" width="16" height="17"><defs><linearGradient id="yc2" x1="0" y1="0" x2="0" y2="1"><stop offset="0" stop-color="#ffe060"/><stop offset="1" stop-color="#e0a000"/></linearGradient></defs><rect x="0.5" y="1.5" width="14" height="14" rx="1.5" fill="url(#yc2)" stroke="#b88000"/><rect x="3.5" y="0.5" width="8" height="3" fill="#e8e8e8" stroke="#909090"/><path d="M6 13h3v-3h2.5l-4-4.5l-4 4.5h2.5z" fill="#40d040" stroke="#209020" stroke-width="0.6"/></svg>
<div style="left:287px;top:27px;width:1px;height:19px;background:#808080;"></div>
<div style="left:288px;top:27px;width:1px;height:19px;background:#ffffff;"></div>
<div style="left:292px;top:25px;width:23px;height:22px;background-color:#fff;background-image:linear-gradient(45deg,#d6d2cc 25%,transparent 25%,transparent 75%,#d6d2cc 75%),linear-gradient(45deg,#d6d2cc 25%,transparent 25%,transparent 75%,#d6d2cc 75%);background-size:2px 2px;background-position:0 0,1px 1px;"></div>
<div style="left:292px;top:25px;width:23px;height:1px;background:#808080;"></div>
<div style="left:292px;top:25px;width:1px;height:22px;background:#808080;"></div>
<div style="left:292px;top:46px;width:23px;height:1px;background:#ffffff;"></div>
<div style="left:314px;top:25px;width:1px;height:22px;background:#ffffff;"></div>
<svg style="left:296px;top:29px" width="16" height="16"><defs><linearGradient id="wg1" x1="0" y1="0" x2="0" y2="1"><stop offset="0" stop-color="#f0fcff"/><stop offset="1" stop-color="#a8dcff"/></linearGradient></defs><rect x="0.5" y="0.5" width="14" height="14" rx="1.5" fill="url(#wg1)" stroke="#4090e0"/><rect x="1" y="1" width="13" height="2" fill="#40a0f0"/></svg>
<svg style="left:318px;top:28px" width="16" height="16"><defs><linearGradient id="wg2" x1="0" y1="0" x2="0" y2="1"><stop offset="0" stop-color="#f0fcff"/><stop offset="1" stop-color="#a8dcff"/></linearGradient></defs><rect x="0.5" y="0.5" width="14" height="14" rx="1" fill="url(#wg2)" stroke="#3088e0"/><rect x="1" y="1" width="13" height="2" fill="#40a0f0"/><path d="M7.5 2.6l2.8 3h-5.6zM7.5 13l2.8-3h-5.6zM0.8 8l3-2.8v5.6zM14.2 8l-3-2.8v5.6z" fill="#2080e0"/></svg>
<svg style="left:341px;top:28px" width="16" height="16"><defs><linearGradient id="bq1" x1="0" y1="0" x2="1" y2="1"><stop offset="0" stop-color="#80d8ff"/><stop offset="1" stop-color="#10a0f8"/></linearGradient></defs><rect x="0.5" y="0.5" width="14" height="14" rx="1" fill="url(#bq1)" stroke="#807870"/></svg>
<svg style="left:364px;top:28px" width="16" height="16"><defs><linearGradient id="bq2" x1="0" y1="0" x2="1" y2="1"><stop offset="0" stop-color="#80d8ff"/><stop offset="1" stop-color="#10a0f8"/></linearGradient></defs><rect x="0.5" y="0.5" width="14" height="14" rx="1" fill="url(#bq2)" stroke="#807870"/><path d="M7.5 1l2.8 3h-5.6zM7.5 14l2.8-3h-5.6zM1 7.5l3-2.8v5.6zM14 7.5l-3-2.8v5.6z" fill="#2080d0"/></svg>
<div style="left:387px;top:27px;width:1px;height:19px;background:#808080;"></div>
<div style="left:388px;top:27px;width:1px;height:19px;background:#ffffff;"></div>
<svg style="left:395px;top:28px" width="17" height="17"><rect x="0.5" y="0.5" width="12" height="10" rx="1" fill="#f4f4f4" stroke="#909090"/><rect x="2" y="2" width="9" height="7" fill="#60b8f0"/><rect x="3.5" y="5.5" width="12" height="10" rx="1" fill="#f4f4f4" stroke="#909090"/><rect x="5" y="7" width="9" height="7" fill="#40a0e8"/><text x="9.5" y="14" font-family="Liberation Sans" font-weight="bold" font-size="9" fill="#fff" text-anchor="middle">2</text></svg>
<svg style="left:417px;top:28px" width="18" height="17"><path d="M2.2 14.8 L11 6" stroke="#c88a00" stroke-width="3.4" stroke-linecap="round"/><path d="M2.2 14.8 L11 6" stroke="#ffd21e" stroke-width="2" stroke-linecap="round"/><path d="M10 3.2 L12.8 0.8 L16.4 4 L13.8 6.6Z" fill="#e4e4e4" stroke="#6a6a6a" stroke-width="0.9"/><path d="M5 5.5 L12.5 13" stroke="#18c4f4" stroke-width="2.6"/><path d="M1 2.6 A3.3 3.3 0 1 0 5.2 1" stroke="#18c4f4" stroke-width="1.9" fill="none"/><path d="M16.6 13.4 A3.3 3.3 0 1 0 12.2 16.4" stroke="#18c4f4" stroke-width="1.9" fill="none"/></svg>
<div style="left:4px;top:769px;width:796px;height:1px;background:#848284;"></div>
<div style="left:4px;top:769px;width:1px;height:18px;background:#848284;"></div>
<div style="left:4px;top:786px;width:796px;height:1px;background:#ffffff;"></div>
<div style="left:799px;top:769px;width:1px;height:18px;background:#ffffff;"></div>
<div style="left:802px;top:769px;width:131px;height:1px;background:#848284;"></div>
<div style="left:802px;top:769px;width:1px;height:18px;background:#848284;"></div>
<div style="left:802px;top:786px;width:131px;height:1px;background:#ffffff;"></div>
<div style="left:932px;top:769px;width:1px;height:18px;background:#ffffff;"></div>
<div style="left:935px;top:769px;width:84px;height:1px;background:#848284;"></div>
<div style="left:935px;top:769px;width:1px;height:18px;background:#848284;"></div>
<div style="left:935px;top:786px;width:84px;height:1px;background:#ffffff;"></div>
<div style="left:1018px;top:769px;width:1px;height:18px;background:#ffffff;"></div>
<div style="left:0px;top:791px;width:1024px;height:28px;background:#c8c6c8;"></div>
<div style="left:0px;top:791px;width:1024px;height:1px;background:#e0dee0;"></div>
<div style="left:0px;top:792px;width:1024px;height:1px;background:#ffffff;"></div>
<div style="left:2px;top:795px;width:54px;height:22px;background:#c8c6c8;"></div>
<div style="left:2px;top:795px;width:54px;height:1px;background:#ffffff;"></div>
<div style="left:2px;top:795px;width:1px;height:22px;background:#ffffff;"></div>
<div style="left:2px;top:816px;width:54px;height:1px;background:#000000;"></div>
<div style="left:55px;top:795px;width:1px;height:22px;background:#000000;"></div>
<div style="left:3px;top:815px;width:52px;height:1px;background:#848284;"></div>
<div style="left:54px;top:796px;width:1px;height:20px;background:#848284;"></div>
<svg style="left:4px;top:798px" width="17" height="16"><path d="M4 1 Q6.5 -0.5 9 1 L8 6.5 Q5.5 5 3 6.5Z" fill="#f06028"/><path d="M9.5 2.5 Q12 3.8 15.5 2 L14.2 8 Q11.5 9.5 8.6 8Z" fill="#70c030"/><path d="M2.5 7 Q5 5.6 7.6 7 L6.6 12.8 Q4 11.2 0.8 12.8Z" fill="#2890e8"/><path d="M8.2 8.6 Q10.8 10 13.8 8.6 L12.8 14.6 Q10 16 7.2 14.2Z" fill="#f8c428"/></svg>
<div class="t" style="left:22px;top:799px;font-size:12px;line-height:14px;font-weight:bold;color:#000;letter-spacing:-0.1px;-webkit-text-stroke:0.35px #000;">Inicio</div>
<svg style="left:65px;top:798px" width="16" height="16"><rect x="0.5" y="0.5" width="7" height="14" fill="#c8d0d8" stroke="#6a727a"/><rect x="1" y="1" width="6" height="1.5" fill="#20404a"/><path d="M1 3.5h6M1 5.5h6" stroke="#f8fcff"/><rect x="5.5" y="8.5" width="9.5" height="7" fill="#98a2aa" stroke="#5a646c"/><path d="M8 8.5v-1.5h4.5v1.5" stroke="#303840" fill="none"/><path d="M6 11.5h8.5" stroke="#c8d0d8"/><rect x="9.8" y="11" width="1" height="2" fill="#fff"/></svg>
<svg style="left:87px;top:798px" width="17" height="16"><rect x="0.5" y="1.5" width="4" height="9" fill="#c4ccd4" stroke="#68707a"/><rect x="1" y="2" width="3" height="1.5" fill="#2a3a40"/><path d="M1 4.5h3M1 6.5h3" stroke="#f4f8fc"/><rect x="1.5" y="7" width="1.5" height="2" fill="#20d020"/><rect x="5.5" y="0.5" width="4" height="8" fill="#c4ccd4" stroke="#68707a"/><rect x="6" y="1" width="3" height="1.5" fill="#2a3a40"/><path d="M6 3.5h3M6 5.5h3" stroke="#f4f8fc"/><rect x="6.5" y="5" width="1.5" height="2" fill="#20d020"/><rect x="10.5" y="1.5" width="4" height="9" fill="#c4ccd4" stroke="#68707a"/><rect x="11" y="2" width="3" height="1.5" fill="#2a3a40"/><path d="M11 4.5h3M11 6.5h3" stroke="#f4f8fc"/><rect x="11.5" y="7" width="1.5" height="2" fill="#20d020"/><rect x="3.5" y="6.5" width="4" height="8" fill="#c4ccd4" stroke="#68707a"/><rect x="4" y="7" width="3" height="1.5" fill="#2a3a40"/><path d="M4 9.5h3M4 11.5h3" stroke="#f4f8fc"/><rect x="6.5" y="10.5" width="10" height="5" fill="#98a4ac" stroke="#5a646c"/><path d="M9.5 10.5v-1.5h4v1.5" stroke="#303840" fill="none"/><path d="M7 12.5h9" stroke="#c8d0d8"/><rect x="11" y="12" width="1" height="2" fill="#fff"/><circle cx="10.5" cy="8.5" r="0.8" fill="#c0d020"/><circle cx="14" cy="8.5" r="0.8" fill="#c0d020"/></svg>
<svg style="left:110px;top:800px" width="16" height="13"><defs><linearGradient id="dk" x1="0" y1="0" x2="1" y2="1"><stop offset="0" stop-color="#1a48a8"/><stop offset="1" stop-color="#5a9ae8"/></linearGradient></defs><rect x="0.5" y="0.5" width="15" height="12" fill="url(#dk)" stroke="#a8c0e0"/><rect x="1" y="9" width="14" height="3" fill="#20262c"/><circle cx="3" cy="10.2" r="1.6" fill="#f0a020"/><circle cx="2.6" cy="10.6" r="0.8" fill="#3090e0"/></svg>
<svg style="left:157px;top:800px" width="10" height="7"><path d="M0.5 0.5l3 3l-3 3M5 0.5l3 3l-3 3" stroke="#000" stroke-width="1.4" fill="none"/></svg>
<div style="left:170px;top:795px;width:160px;height:22px;background-color:#fff;background-image:linear-gradient(45deg,#c8c6c8 25%,transparent 25%,transparent 75%,#c8c6c8 75%),linear-gradient(45deg,#c8c6c8 25%,transparent 25%,transparent 75%,#c8c6c8 75%);background-size:2px 2px;background-position:0 0,1px 1px;"></div>
<div style="left:170px;top:795px;width:160px;height:1px;background:#000000;"></div>
<div style="left:170px;top:795px;width:1px;height:22px;background:#000000;"></div>
<div style="left:171px;top:796px;width:158px;height:1px;background:#848284;"></div>
<div style="left:171px;top:796px;width:1px;height:20px;background:#848284;"></div>
<div style="left:170px;top:816px;width:160px;height:1px;background:#ffffff;"></div>
<div style="left:329px;top:795px;width:1px;height:22px;background:#ffffff;"></div>
<svg style="left:175px;top:798px" width="17" height="16"><rect x="0.5" y="1.5" width="4" height="9" fill="#c4ccd4" stroke="#68707a"/><rect x="1" y="2" width="3" height="1.5" fill="#2a3a40"/><path d="M1 4.5h3M1 6.5h3" stroke="#f4f8fc"/><rect x="1.5" y="7" width="1.5" height="2" fill="#20d020"/><rect x="5.5" y="0.5" width="4" height="8" fill="#c4ccd4" stroke="#68707a"/><rect x="6" y="1" width="3" height="1.5" fill="#2a3a40"/><path d="M6 3.5h3M6 5.5h3" stroke="#f4f8fc"/><rect x="6.5" y="5" width="1.5" height="2" fill="#20d020"/><rect x="10.5" y="1.5" width="4" height="9" fill="#c4ccd4" stroke="#68707a"/><rect x="11" y="2" width="3" height="1.5" fill="#2a3a40"/><path d="M11 4.5h3M11 6.5h3" stroke="#f4f8fc"/><rect x="11.5" y="7" width="1.5" height="2" fill="#20d020"/><rect x="3.5" y="6.5" width="4" height="8" fill="#c4ccd4" stroke="#68707a"/><rect x="4" y="7" width="3" height="1.5" fill="#2a3a40"/><path d="M4 9.5h3M4 11.5h3" stroke="#f4f8fc"/><rect x="6.5" y="10.5" width="10" height="5" fill="#98a4ac" stroke="#5a646c"/><path d="M9.5 10.5v-1.5h4v1.5" stroke="#303840" fill="none"/><path d="M7 12.5h9" stroke="#c8d0d8"/><rect x="11" y="12" width="1" height="2" fill="#fff"/><circle cx="10.5" cy="8.5" r="0.8" fill="#c0d020"/><circle cx="14" cy="8.5" r="0.8" fill="#c0d020"/></svg>
<div class="t" style="left:195px;top:800px;font-size:12px;line-height:14px;font-weight:bold;color:#000;letter-spacing:-0.15px;">Administración de cl...</div>
<div style="left:333px;top:795px;width:160px;height:22px;background:#c8c6c8;"></div>
<div style="left:333px;top:795px;width:160px;height:1px;background:#ffffff;"></div>
<div style="left:333px;top:795px;width:1px;height:22px;background:#ffffff;"></div>
<div style="left:333px;top:816px;width:160px;height:1px;background:#000000;"></div>
<div style="left:492px;top:795px;width:1px;height:22px;background:#000000;"></div>
<div style="left:334px;top:815px;width:158px;height:1px;background:#848284;"></div>
<div style="left:491px;top:796px;width:1px;height:20px;background:#848284;"></div>
<svg style="left:338px;top:798px" width="16" height="16"><rect x="0.5" y="0.5" width="7" height="14" fill="#c8d0d8" stroke="#6a727a"/><rect x="1" y="1" width="6" height="1.5" fill="#20404a"/><path d="M1 3.5h6M1 5.5h6" stroke="#f8fcff"/><rect x="5.5" y="8.5" width="9.5" height="7" fill="#98a2aa" stroke="#5a646c"/><path d="M8 8.5v-1.5h4.5v1.5" stroke="#303840" fill="none"/><path d="M6 11.5h8.5" stroke="#c8d0d8"/><rect x="9.8" y="11" width="1" height="2" fill="#fff"/></svg>
<div class="t" style="left:357px;top:799px;font-size:11px;line-height:13px;font-weight:normal;color:#000;letter-spacing:-0.3px;">Administrador del servidor</div>
<div style="left:879px;top:795px;width:142px;height:22px;background:#c8c6c8;"></div>
<div style="left:879px;top:795px;width:142px;height:1px;background:#848284;"></div>
<div style="left:879px;top:795px;width:1px;height:22px;background:#848284;"></div>
<div style="left:879px;top:816px;width:142px;height:1px;background:#ffffff;"></div>
<div style="left:1020px;top:795px;width:1px;height:22px;background:#ffffff;"></div>
<svg style="left:881px;top:798px" width="17" height="16"><rect x="4.5" y="2.5" width="11" height="9" fill="#e0e0e0" stroke="#808080"/><rect x="6" y="4" width="8" height="6" fill="#60a8e0"/><path d="M1 1h4q2 0 2 2.5t-2 2.5h-2l3 6" stroke="#f06010" stroke-width="2" fill="none"/><path d="M1 1v11" stroke="#f06010" stroke-width="2"/><rect x="6" y="12" width="8" height="3" fill="#c0c0c0"/></svg>
<svg style="left:900px;top:798px" width="17" height="17"><circle cx="8" cy="8" r="7.5" fill="#2070c0"/><circle cx="7" cy="6" r="4" fill="#60a8e8" opacity="0.6"/><path d="M1 9h3l2-5l2 8l2-4h5" stroke="#fff" stroke-width="1" fill="none"/><rect x="10" y="10" width="7" height="7" fill="#30b030"/><path d="M11 13.5l1.5 1.5l3-3" stroke="#fff" fill="none"/></svg>
<svg style="left:918px;top:798px" width="17" height="17"><rect x="1" y="1" width="12" height="8" fill="#10a020" stroke="#005010"/><rect x="8" y="4" width="7" height="5" fill="#f0e020" stroke="#606000"/><path d="M1 11h2v5M3 13h3v3M8 12v4M8 12h3v2h-3" stroke="#1030a0" stroke-width="1.4" fill="none"/></svg>
<svg style="left:946px;top:798px" width="17" height="16"><rect x="5.5" y="0.5" width="10" height="8" fill="#2060c0" stroke="#808890"/><rect x="0.5" y="5.5" width="10" height="8" fill="#3070d0" stroke="#808890"/><rect x="3" y="14" width="5" height="2" fill="#909090"/></svg>
<svg style="left:964px;top:798px" width="17" height="17"><path d="M1 5h3l5-4v14l-5-4h-3z" fill="#e8e8f0" stroke="#606070"/><circle cx="12" cy="12" r="4.5" fill="#e03030"/><path d="M10 10l4 4M14 10l-4 4" stroke="#fff" stroke-width="1.3"/></svg>
<div class="t" style="left:988px;top:800px;font-size:11px;line-height:13px;font-weight:normal;color:#000;letter-spacing:0px;">10:37</div>
</body></html>
